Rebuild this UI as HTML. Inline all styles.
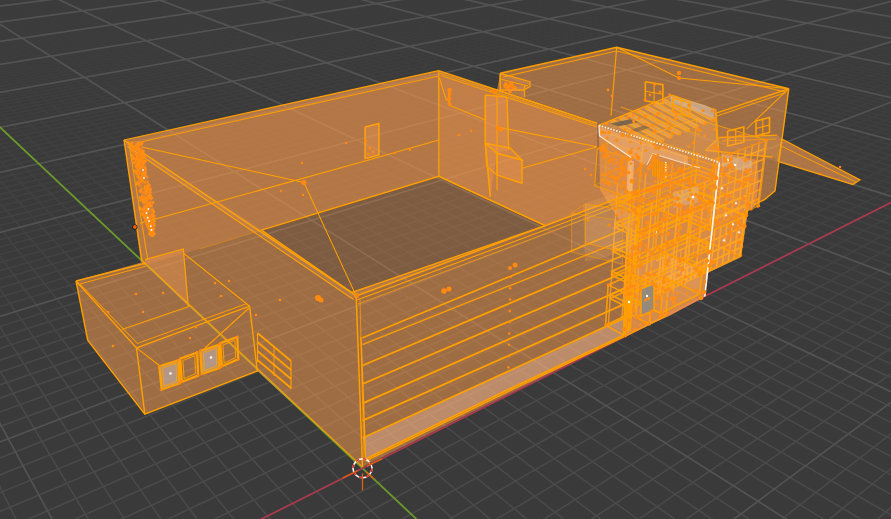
<!DOCTYPE html><html><head><meta charset="utf-8"><title>3D Viewport</title><style>html,body{margin:0;padding:0;background:#3a3a3a;overflow:hidden}svg{display:block}</style></head><body><svg width="891" height="519" viewBox="0 0 891 519">
<defs><linearGradient id="fade" x1="0" y1="0" x2="0" y2="1"><stop offset="0" stop-color="#fff" stop-opacity="0.12"/><stop offset="0.25" stop-color="#fff" stop-opacity="0.30"/><stop offset="0.5" stop-color="#fff" stop-opacity="0.5"/><stop offset="0.75" stop-color="#fff" stop-opacity="0.95"/><stop offset="1" stop-color="#fff" stop-opacity="1"/></linearGradient><mask id="m" maskUnits="userSpaceOnUse" x="0" y="0" width="891" height="519"><rect width="891" height="519" fill="url(#fade)"/></mask></defs>
<rect width="891" height="519" fill="#3a3a3a"/>
<g stroke="#4a4a4a" stroke-width="1.6" mask="url(#m)"><line x1="18.3" y1="524.0" x2="-5.0" y2="476.7"/><line x1="91.2" y1="524.0" x2="-5.0" y2="362.7"/><line x1="127.7" y1="524.0" x2="-5.0" y2="319.2"/><line x1="164.3" y1="524.0" x2="-5.0" y2="282.0"/><line x1="200.9" y1="524.0" x2="-5.0" y2="249.9"/><line x1="237.6" y1="524.0" x2="-5.0" y2="221.9"/><line x1="274.3" y1="524.0" x2="-5.0" y2="197.3"/><line x1="311.1" y1="524.0" x2="-5.0" y2="175.5"/><line x1="347.9" y1="524.0" x2="-5.0" y2="156.0"/><line x1="384.8" y1="524.0" x2="-5.0" y2="138.4"/><line x1="458.7" y1="524.0" x2="-5.0" y2="108.2"/><line x1="495.7" y1="524.0" x2="-5.0" y2="95.1"/><line x1="532.8" y1="524.0" x2="-5.0" y2="83.1"/><line x1="570.0" y1="524.0" x2="-5.0" y2="72.1"/><line x1="607.2" y1="524.0" x2="-5.0" y2="62.0"/><line x1="644.4" y1="524.0" x2="-5.0" y2="52.6"/><line x1="681.8" y1="524.0" x2="-5.0" y2="43.8"/><line x1="719.1" y1="524.0" x2="-5.0" y2="35.7"/><line x1="756.5" y1="524.0" x2="-5.0" y2="28.2"/><line x1="831.5" y1="524.0" x2="-5.0" y2="14.5"/><line x1="869.1" y1="524.0" x2="-5.0" y2="8.3"/><line x1="896.0" y1="517.8" x2="-5.0" y2="2.4"/><line x1="896.0" y1="497.1" x2="-5.0" y2="-3.1"/><line x1="896.0" y1="477.5" x2="1.1" y2="-5.0"/><line x1="896.0" y1="459.0" x2="10.7" y2="-5.0"/><line x1="896.0" y1="441.5" x2="20.3" y2="-5.0"/><line x1="896.0" y1="424.9" x2="29.9" y2="-5.0"/><line x1="896.0" y1="409.1" x2="39.5" y2="-5.0"/><line x1="896.0" y1="379.8" x2="58.7" y2="-5.0"/><line x1="896.0" y1="366.2" x2="68.4" y2="-5.0"/><line x1="896.0" y1="353.2" x2="78.0" y2="-5.0"/><line x1="896.0" y1="340.7" x2="87.7" y2="-5.0"/><line x1="896.0" y1="328.9" x2="97.4" y2="-5.0"/><line x1="896.0" y1="317.5" x2="107.1" y2="-5.0"/><line x1="896.0" y1="306.6" x2="116.8" y2="-5.0"/><line x1="896.0" y1="296.2" x2="126.6" y2="-5.0"/><line x1="896.0" y1="286.2" x2="136.3" y2="-5.0"/><line x1="896.0" y1="267.3" x2="155.8" y2="-5.0"/><line x1="896.0" y1="258.4" x2="165.6" y2="-5.0"/><line x1="896.0" y1="249.8" x2="175.4" y2="-5.0"/><line x1="896.0" y1="241.6" x2="185.3" y2="-5.0"/><line x1="896.0" y1="233.6" x2="195.1" y2="-5.0"/><line x1="896.0" y1="226.0" x2="204.9" y2="-5.0"/><line x1="896.0" y1="218.5" x2="214.8" y2="-5.0"/><line x1="896.0" y1="211.4" x2="224.7" y2="-5.0"/><line x1="896.0" y1="204.5" x2="234.6" y2="-5.0"/><line x1="896.0" y1="191.3" x2="254.4" y2="-5.0"/><line x1="896.0" y1="185.0" x2="264.3" y2="-5.0"/><line x1="896.0" y1="179.0" x2="274.3" y2="-5.0"/><line x1="896.0" y1="173.1" x2="284.3" y2="-5.0"/><line x1="896.0" y1="167.4" x2="294.2" y2="-5.0"/><line x1="896.0" y1="161.9" x2="304.2" y2="-5.0"/><line x1="896.0" y1="156.5" x2="314.2" y2="-5.0"/><line x1="896.0" y1="151.3" x2="324.3" y2="-5.0"/><line x1="896.0" y1="146.2" x2="334.3" y2="-5.0"/><line x1="896.0" y1="136.5" x2="354.4" y2="-5.0"/><line x1="896.0" y1="131.9" x2="364.5" y2="-5.0"/><line x1="896.0" y1="127.4" x2="374.6" y2="-5.0"/><line x1="896.0" y1="123.0" x2="384.7" y2="-5.0"/><line x1="896.0" y1="118.7" x2="394.9" y2="-5.0"/><line x1="896.0" y1="114.5" x2="405.0" y2="-5.0"/><line x1="896.0" y1="110.4" x2="415.2" y2="-5.0"/><line x1="896.0" y1="106.5" x2="425.4" y2="-5.0"/><line x1="896.0" y1="102.6" x2="435.5" y2="-5.0"/><line x1="896.0" y1="95.2" x2="456.0" y2="-5.0"/><line x1="896.0" y1="91.6" x2="466.2" y2="-5.0"/><line x1="896.0" y1="88.1" x2="476.5" y2="-5.0"/><line x1="896.0" y1="84.7" x2="486.7" y2="-5.0"/><line x1="896.0" y1="81.3" x2="497.0" y2="-5.0"/><line x1="896.0" y1="78.1" x2="507.3" y2="-5.0"/><line x1="896.0" y1="74.9" x2="517.6" y2="-5.0"/><line x1="896.0" y1="71.7" x2="528.0" y2="-5.0"/><line x1="896.0" y1="68.7" x2="538.3" y2="-5.0"/><line x1="896.0" y1="62.8" x2="559.1" y2="-5.0"/><line x1="896.0" y1="60.0" x2="569.5" y2="-5.0"/><line x1="896.0" y1="57.2" x2="579.9" y2="-5.0"/><line x1="896.0" y1="54.4" x2="590.3" y2="-5.0"/><line x1="896.0" y1="51.8" x2="600.7" y2="-5.0"/><line x1="896.0" y1="49.1" x2="611.2" y2="-5.0"/><line x1="896.0" y1="46.6" x2="621.7" y2="-5.0"/><line x1="896.0" y1="44.1" x2="632.2" y2="-5.0"/><line x1="896.0" y1="41.6" x2="642.7" y2="-5.0"/><line x1="896.0" y1="36.8" x2="663.7" y2="-5.0"/><line x1="896.0" y1="34.5" x2="674.3" y2="-5.0"/><line x1="896.0" y1="32.2" x2="684.8" y2="-5.0"/><line x1="896.0" y1="30.0" x2="695.4" y2="-5.0"/><line x1="896.0" y1="27.8" x2="706.0" y2="-5.0"/><line x1="896.0" y1="25.7" x2="716.7" y2="-5.0"/><line x1="896.0" y1="23.6" x2="727.3" y2="-5.0"/><line x1="896.0" y1="21.5" x2="737.9" y2="-5.0"/><line x1="896.0" y1="19.5" x2="748.6" y2="-5.0"/><line x1="896.0" y1="15.5" x2="770.0" y2="-5.0"/><line x1="896.0" y1="13.6" x2="780.7" y2="-5.0"/><line x1="896.0" y1="11.7" x2="791.5" y2="-5.0"/><line x1="896.0" y1="9.8" x2="802.2" y2="-5.0"/><line x1="896.0" y1="8.0" x2="813.0" y2="-5.0"/><line x1="896.0" y1="6.2" x2="823.8" y2="-5.0"/><line x1="896.0" y1="4.4" x2="834.6" y2="-5.0"/><line x1="896.0" y1="2.7" x2="845.4" y2="-5.0"/><line x1="896.0" y1="1.0" x2="856.2" y2="-5.0"/><line x1="896.0" y1="-2.3" x2="877.9" y2="-5.0"/><line x1="896.0" y1="-3.9" x2="888.8" y2="-5.0"/><line x1="871.9" y1="524.0" x2="896.0" y2="503.0"/><line x1="823.7" y1="524.0" x2="896.0" y2="464.4"/><line x1="775.6" y1="524.0" x2="896.0" y2="429.8"/><line x1="679.5" y1="524.0" x2="896.0" y2="370.3"/><line x1="631.6" y1="524.0" x2="896.0" y2="344.6"/><line x1="583.8" y1="524.0" x2="896.0" y2="321.1"/><line x1="536.1" y1="524.0" x2="896.0" y2="299.5"/><line x1="488.5" y1="524.0" x2="896.0" y2="279.6"/><line x1="441.0" y1="524.0" x2="896.0" y2="261.3"/><line x1="393.5" y1="524.0" x2="896.0" y2="244.3"/><line x1="346.2" y1="524.0" x2="896.0" y2="228.5"/><line x1="298.9" y1="524.0" x2="896.0" y2="213.8"/><line x1="204.6" y1="524.0" x2="896.0" y2="187.2"/><line x1="157.6" y1="524.0" x2="896.0" y2="175.1"/><line x1="110.7" y1="524.0" x2="896.0" y2="163.8"/><line x1="63.9" y1="524.0" x2="896.0" y2="153.1"/><line x1="17.1" y1="524.0" x2="896.0" y2="143.1"/><line x1="-5.0" y1="513.6" x2="896.0" y2="133.6"/><line x1="-5.0" y1="494.8" x2="896.0" y2="124.6"/><line x1="-5.0" y1="476.9" x2="896.0" y2="116.0"/><line x1="-5.0" y1="459.9" x2="896.0" y2="108.0"/><line x1="-5.0" y1="428.5" x2="896.0" y2="92.9"/><line x1="-5.0" y1="413.8" x2="896.0" y2="86.0"/><line x1="-5.0" y1="399.9" x2="896.0" y2="79.3"/><line x1="-5.0" y1="386.6" x2="896.0" y2="73.0"/><line x1="-5.0" y1="373.9" x2="896.0" y2="66.9"/><line x1="-5.0" y1="361.7" x2="896.0" y2="61.1"/><line x1="-5.0" y1="350.0" x2="896.0" y2="55.6"/><line x1="-5.0" y1="338.9" x2="896.0" y2="50.2"/><line x1="-5.0" y1="328.1" x2="896.0" y2="45.1"/><line x1="-5.0" y1="308.0" x2="896.0" y2="35.5"/><line x1="-5.0" y1="298.5" x2="896.0" y2="31.0"/><line x1="-5.0" y1="289.3" x2="896.0" y2="26.6"/><line x1="-5.0" y1="280.5" x2="896.0" y2="22.4"/><line x1="-5.0" y1="272.0" x2="896.0" y2="18.3"/><line x1="-5.0" y1="263.8" x2="896.0" y2="14.4"/><line x1="-5.0" y1="255.9" x2="896.0" y2="10.7"/><line x1="-5.0" y1="248.3" x2="896.0" y2="7.0"/><line x1="-5.0" y1="240.9" x2="896.0" y2="3.5"/><line x1="-5.0" y1="226.8" x2="896.0" y2="-3.2"/><line x1="-5.0" y1="220.2" x2="890.5" y2="-5.0"/><line x1="-5.0" y1="213.7" x2="878.0" y2="-5.0"/><line x1="-5.0" y1="207.4" x2="865.5" y2="-5.0"/><line x1="-5.0" y1="201.4" x2="853.0" y2="-5.0"/><line x1="-5.0" y1="195.5" x2="840.5" y2="-5.0"/><line x1="-5.0" y1="189.8" x2="828.1" y2="-5.0"/><line x1="-5.0" y1="184.2" x2="815.7" y2="-5.0"/><line x1="-5.0" y1="178.8" x2="803.3" y2="-5.0"/><line x1="-5.0" y1="168.5" x2="778.5" y2="-5.0"/><line x1="-5.0" y1="163.5" x2="766.2" y2="-5.0"/><line x1="-5.0" y1="158.7" x2="753.9" y2="-5.0"/><line x1="-5.0" y1="154.1" x2="741.6" y2="-5.0"/><line x1="-5.0" y1="149.5" x2="729.3" y2="-5.0"/><line x1="-5.0" y1="145.1" x2="717.1" y2="-5.0"/><line x1="-5.0" y1="140.7" x2="704.8" y2="-5.0"/><line x1="-5.0" y1="136.5" x2="692.6" y2="-5.0"/><line x1="-5.0" y1="132.4" x2="680.5" y2="-5.0"/><line x1="-5.0" y1="124.5" x2="656.2" y2="-5.0"/><line x1="-5.0" y1="120.7" x2="644.0" y2="-5.0"/><line x1="-5.0" y1="117.0" x2="631.9" y2="-5.0"/><line x1="-5.0" y1="113.4" x2="619.9" y2="-5.0"/><line x1="-5.0" y1="109.8" x2="607.8" y2="-5.0"/><line x1="-5.0" y1="106.4" x2="595.8" y2="-5.0"/><line x1="-5.0" y1="103.0" x2="583.8" y2="-5.0"/><line x1="-5.0" y1="99.7" x2="571.8" y2="-5.0"/><line x1="-5.0" y1="96.4" x2="559.8" y2="-5.0"/><line x1="-5.0" y1="90.2" x2="535.9" y2="-5.0"/><line x1="-5.0" y1="87.2" x2="524.0" y2="-5.0"/><line x1="-5.0" y1="84.2" x2="512.1" y2="-5.0"/><line x1="-5.0" y1="81.3" x2="500.3" y2="-5.0"/><line x1="-5.0" y1="78.5" x2="488.4" y2="-5.0"/><line x1="-5.0" y1="75.7" x2="476.6" y2="-5.0"/><line x1="-5.0" y1="73.0" x2="464.8" y2="-5.0"/><line x1="-5.0" y1="70.3" x2="453.0" y2="-5.0"/><line x1="-5.0" y1="67.7" x2="441.2" y2="-5.0"/><line x1="-5.0" y1="62.6" x2="417.8" y2="-5.0"/><line x1="-5.0" y1="60.2" x2="406.1" y2="-5.0"/><line x1="-5.0" y1="57.8" x2="394.4" y2="-5.0"/><line x1="-5.0" y1="55.4" x2="382.7" y2="-5.0"/><line x1="-5.0" y1="53.1" x2="371.1" y2="-5.0"/><line x1="-5.0" y1="50.8" x2="359.5" y2="-5.0"/><line x1="-5.0" y1="48.6" x2="347.9" y2="-5.0"/><line x1="-5.0" y1="46.4" x2="336.3" y2="-5.0"/><line x1="-5.0" y1="44.2" x2="324.7" y2="-5.0"/><line x1="-5.0" y1="40.0" x2="301.6" y2="-5.0"/><line x1="-5.0" y1="38.0" x2="290.1" y2="-5.0"/><line x1="-5.0" y1="36.0" x2="278.7" y2="-5.0"/><line x1="-5.0" y1="34.0" x2="267.2" y2="-5.0"/><line x1="-5.0" y1="32.1" x2="255.8" y2="-5.0"/><line x1="-5.0" y1="30.2" x2="244.3" y2="-5.0"/><line x1="-5.0" y1="28.3" x2="232.9" y2="-5.0"/><line x1="-5.0" y1="26.5" x2="221.5" y2="-5.0"/><line x1="-5.0" y1="24.7" x2="210.2" y2="-5.0"/><line x1="-5.0" y1="21.2" x2="187.5" y2="-5.0"/><line x1="-5.0" y1="19.4" x2="176.2" y2="-5.0"/><line x1="-5.0" y1="17.8" x2="164.9" y2="-5.0"/><line x1="-5.0" y1="16.1" x2="153.6" y2="-5.0"/><line x1="-5.0" y1="14.5" x2="142.4" y2="-5.0"/><line x1="-5.0" y1="12.8" x2="131.2" y2="-5.0"/><line x1="-5.0" y1="11.3" x2="119.9" y2="-5.0"/><line x1="-5.0" y1="9.7" x2="108.7" y2="-5.0"/><line x1="-5.0" y1="8.2" x2="97.6" y2="-5.0"/><line x1="-5.0" y1="5.2" x2="75.3" y2="-5.0"/><line x1="-5.0" y1="3.7" x2="64.2" y2="-5.0"/><line x1="-5.0" y1="2.3" x2="53.1" y2="-5.0"/><line x1="-5.0" y1="0.8" x2="42.0" y2="-5.0"/><line x1="-5.0" y1="-0.6" x2="30.9" y2="-5.0"/><line x1="-5.0" y1="-2.0" x2="19.9" y2="-5.0"/><line x1="-5.0" y1="-3.3" x2="8.8" y2="-5.0"/><line x1="-5.0" y1="-4.7" x2="-2.2" y2="-5.0"/></g>
<g stroke="#535353" stroke-width="1.7"><line x1="54.7" y1="524.0" x2="-5.0" y2="414.4"/><line x1="794.0" y1="524.0" x2="-5.0" y2="21.1"/><line x1="896.0" y1="394.1" x2="49.1" y2="-5.0"/><line x1="896.0" y1="276.6" x2="146.1" y2="-5.0"/><line x1="896.0" y1="197.8" x2="244.5" y2="-5.0"/><line x1="896.0" y1="141.3" x2="344.4" y2="-5.0"/><line x1="896.0" y1="98.8" x2="445.8" y2="-5.0"/><line x1="896.0" y1="65.7" x2="548.7" y2="-5.0"/><line x1="896.0" y1="39.2" x2="653.2" y2="-5.0"/><line x1="896.0" y1="17.5" x2="759.3" y2="-5.0"/><line x1="896.0" y1="-0.7" x2="867.1" y2="-5.0"/><line x1="727.5" y1="524.0" x2="896.0" y2="398.5"/><line x1="-5.0" y1="443.8" x2="896.0" y2="100.3"/><line x1="-5.0" y1="317.9" x2="896.0" y2="40.2"/><line x1="-5.0" y1="233.7" x2="896.0" y2="0.1"/><line x1="-5.0" y1="173.6" x2="790.9" y2="-5.0"/><line x1="-5.0" y1="128.4" x2="668.3" y2="-5.0"/><line x1="-5.0" y1="93.3" x2="547.8" y2="-5.0"/><line x1="-5.0" y1="65.1" x2="429.5" y2="-5.0"/><line x1="-5.0" y1="42.1" x2="313.2" y2="-5.0"/><line x1="-5.0" y1="22.9" x2="198.8" y2="-5.0"/><line x1="-5.0" y1="6.7" x2="86.4" y2="-5.0"/></g>
<line x1="421.7" y1="524.0" x2="-5.0" y2="122.6" stroke="#6b9a2a" stroke-width="1.8"/>
<line x1="251.7" y1="524.0" x2="896.0" y2="200.1" stroke="#a83a4e" stroke-width="1.8"/>
<polygon points="124.0,140.0 438.7,70.7 497.0,90.0 500.3,73.3 616.7,47.3 788.8,88.7 781.9,139.0 859.9,179.9 853.0,184.5 778.4,161.5 775.0,191.0 764.5,199.6 754.0,204.8 755.7,206.2 748.0,210.8 743.3,241.6 740.2,257.5 707.9,272.8 704.8,296.8 669.4,315.8 623.5,336.5 362.5,467.0 257.3,371.0 144.8,414.1 87.7,340.1 76.0,281.0 141.0,262.5" fill="#ff9e50" fill-opacity="0.342" />
<path d="M124.0 140.0 L438.7 70.7 L497.0 90.0 L500.3 73.3 L616.7 47.3 L788.8 88.7 L781.9 139.0 L859.9 179.9 L853.0 184.5 L778.4 161.5 L775.0 191.0 L764.5 199.6 L754.0 204.8 L755.7 206.2 L748.0 210.8 L743.3 241.6 L740.2 257.5 L707.9 272.8 L704.8 296.8 L669.4 315.8 L623.5 336.5 L362.5 467.0 L257.3 371.0 L144.8 414.1 L87.7 340.1 L76.0 281.0 L141.0 262.5 Z M261.4 230.1 L438.8 176.3 L545.3 225.7 L352.0 292.5 Z" fill="#ff9e50" fill-opacity="0.263" fill-rule="evenodd"/>
<path d="M124.0 140.0 L438.7 70.7 L597.0 123.3 L597.0 150.0 L595.0 186.0 L627.0 200.0 L634.9 193.6 L356.2 296.0 Z M261.4 230.1 L438.8 176.3 L545.3 225.7 L352.0 292.5 Z" fill="#ff9e50" fill-opacity="0.21" fill-rule="evenodd"/>
<polygon points="124.0,140.0 261.4,230.1 143.0,266.0" fill="#ff9e50" fill-opacity="0.210" />
<polygon points="438.7,73.0 497.0,92.0 597.0,125.0 597.0,150.0 595.0,186.0 627.0,200.0 634.9,193.6 545.3,225.7 438.8,176.3" fill="#ff9e50" fill-opacity="0.190" />
<polygon points="129.5,141.0 142.0,141.0 156.0,225.0 153.0,238.0 147.0,225.0" fill="#ff9020" fill-opacity="0.350" />
<polygon points="145.0,259.7 183.3,249.0 188.3,306.3 150.0,268.0" fill="#ff9e50" fill-opacity="0.350" />
<polygon points="598.9,125.4 719.4,162.3 721.0,152.0 757.0,160.0 758.7,180.0 755.7,206.2 748.0,210.8 743.3,241.6 740.2,257.5 707.9,272.8 704.8,296.8 669.4,315.8 623.5,336.5 627.0,232.0 600.0,190.0" fill="#ffa04b" fill-opacity="0.550" />
<polygon points="598.9,125.4 672.0,95.0 716.0,110.0 719.4,162.3" fill="#ffa850" fill-opacity="0.220" />
<polygon points="583.0,204.0 631.0,188.0 631.0,250.0 585.0,262.0" fill="#ffb060" fill-opacity="0.180" />
<polygon points="781.9,139.0 859.9,179.9 853.0,184.5 778.4,161.5" fill="#ff9e50" fill-opacity="0.150" />
<polygon points="363.0,438.0 624.3,318.0 624.3,335.0 507.4,390.0 365.0,459.3" fill="#ecc0a8" fill-opacity="0.380" />
<polyline points="124.0,140.0 438.7,70.7" fill="none" stroke="#ffa000" stroke-width="1.26" stroke-opacity="1.00" />
<polyline points="141.7,141.7 438.7,76.0" fill="none" stroke="#ffa000" stroke-width="1.03" stroke-opacity="0.90" />
<polyline points="124.0,140.0 356.2,296.0" fill="none" stroke="#ffa000" stroke-width="1.49" stroke-opacity="1.00" />
<polyline points="127.5,146.5 353.5,299.5" fill="none" stroke="#ffa000" stroke-width="1.15" stroke-opacity="0.95" />
<polygon points="124.0,140.0 356.2,296.0 353.5,299.5 127.5,146.5" fill="#ffb060" fill-opacity="0.180" />
<polyline points="356.2,296.0 362.5,467.0" fill="none" stroke="#ffa000" stroke-width="1.49" stroke-opacity="1.00" />
<polyline points="360.0,300.0 364.0,460.0" fill="none" stroke="#ffa000" stroke-width="0.92" stroke-opacity="0.80" />
<polyline points="124.0,140.0 141.7,260.0" fill="none" stroke="#ffa000" stroke-width="1.38" stroke-opacity="1.00" />
<polyline points="438.7,70.7 438.8,176.3" fill="none" stroke="#ffa000" stroke-width="1.26" stroke-opacity="1.00" />
<polyline points="261.4,230.1 438.8,176.3 545.3,225.7 352.0,292.5 261.4,230.1" fill="none" stroke="#ffa000" stroke-width="1.38" stroke-opacity="1.00" />
<polyline points="200.0,248.9 261.4,230.1" fill="none" stroke="#ffa000" stroke-width="1.15" stroke-opacity="0.35" />
<polyline points="140.0,223.3 357.0,163.3 438.7,140.0" fill="none" stroke="#ffa000" stroke-width="1.15" stroke-opacity="1.00" />
<polyline points="141.7,147.0 303.9,182.5 356.2,296.0" fill="none" stroke="#ffa000" stroke-width="1.03" stroke-opacity="1.00" />
<polyline points="438.7,70.7 497.0,90.0 597.0,123.3" fill="none" stroke="#ffa000" stroke-width="1.38" stroke-opacity="1.00" />
<polyline points="441.0,75.5 497.0,94.0 597.0,127.0" fill="none" stroke="#ffa000" stroke-width="1.15" stroke-opacity="0.95" />
<polyline points="440.0,73.0 497.0,92.0 597.0,125.2" fill="none" stroke="#ffa000" stroke-width="0.92" stroke-opacity="0.80" />
<polyline points="438.8,176.3 545.3,225.7" fill="none" stroke="#ffa000" stroke-width="1.15" stroke-opacity="1.00" />
<polyline points="141.7,260.0 362.5,467.0" fill="none" stroke="#ffa000" stroke-width="1.15" stroke-opacity="0.80" />
<polyline points="356.2,296.0 543.7,226.3 640.0,190.0" fill="none" stroke="#ffa000" stroke-width="1.49" stroke-opacity="1.00" />
<polyline points="357.0,300.0 545.0,230.0 640.0,194.0" fill="none" stroke="#ffa000" stroke-width="1.15" stroke-opacity="1.00" />
<polyline points="358.0,304.0 545.0,234.0 640.0,198.0" fill="none" stroke="#ffa000" stroke-width="0.92" stroke-opacity="0.80" />
<polyline points="362.5,337.8 624.3,228.9" fill="none" stroke="#ffa000" stroke-width="1.61" stroke-opacity="1.00" />
<polyline points="362.5,344.7 624.3,239.8" fill="none" stroke="#ffa000" stroke-width="1.38" stroke-opacity="0.95" />
<polyline points="362.5,365.5 624.3,255.0" fill="none" stroke="#ffa000" stroke-width="1.84" stroke-opacity="1.00" />
<polyline points="362.5,384.0 624.3,272.4" fill="none" stroke="#ffa000" stroke-width="1.84" stroke-opacity="1.00" />
<polyline points="362.5,403.3 624.3,288.7" fill="none" stroke="#ffa000" stroke-width="1.84" stroke-opacity="1.00" />
<polyline points="362.5,420.7 624.3,304.1" fill="none" stroke="#ffa000" stroke-width="1.84" stroke-opacity="1.00" />
<polyline points="362.5,438.0 624.3,318.1" fill="none" stroke="#ffa000" stroke-width="1.72" stroke-opacity="1.00" />
<polyline points="365.0,459.3 507.4,390.0 624.3,335.0" fill="none" stroke="#ffa000" stroke-width="1.72" stroke-opacity="1.00" />
<polyline points="365.5,461.0 507.4,391.8 624.3,336.6" fill="none" stroke="#ffa000" stroke-width="1.49" stroke-opacity="1.00" />
<polyline points="361.0,337.0 365.5,457.5" fill="none" stroke="#ffa000" stroke-width="1.49" stroke-opacity="1.00" />
<polyline points="627.0,232.0 623.5,335.0" fill="none" stroke="#ffa000" stroke-width="1.61" stroke-opacity="1.00" />
<polyline points="631.0,234.0 628.0,333.0" fill="none" stroke="#ffa000" stroke-width="1.15" stroke-opacity="1.00" />
<circle cx="510.5" cy="277.0" r="1.3" fill="#ff8a10" fill-opacity="0.95"/>
<circle cx="510.2" cy="288.3" r="1.3" fill="#ff8a10" fill-opacity="0.95"/>
<circle cx="510.0" cy="299.6" r="1.3" fill="#ff8a10" fill-opacity="0.95"/>
<circle cx="509.8" cy="310.9" r="1.3" fill="#ff8a10" fill-opacity="0.95"/>
<circle cx="509.5" cy="322.2" r="1.3" fill="#ff8a10" fill-opacity="0.95"/>
<circle cx="509.2" cy="333.5" r="1.3" fill="#ff8a10" fill-opacity="0.95"/>
<circle cx="509.0" cy="344.8" r="1.3" fill="#ff8a10" fill-opacity="0.95"/>
<circle cx="508.8" cy="356.1" r="1.3" fill="#ff8a10" fill-opacity="0.95"/>
<circle cx="508.5" cy="367.4" r="1.3" fill="#ff8a10" fill-opacity="0.95"/>
<polyline points="76.0,281.0 136.5,347.9 249.6,306.2" fill="none" stroke="#ffa000" stroke-width="1.38" stroke-opacity="1.00" />
<polyline points="76.0,281.0 146.3,263.0" fill="none" stroke="#ffa000" stroke-width="1.38" stroke-opacity="1.00" />
<polyline points="76.0,281.0 87.7,340.1 144.8,414.1 257.3,371.0 249.6,306.2" fill="none" stroke="#ffa000" stroke-width="1.38" stroke-opacity="1.00" />
<polyline points="136.5,347.9 144.8,414.1" fill="none" stroke="#ffa000" stroke-width="1.38" stroke-opacity="1.00" />
<polyline points="79.5,283.5 137.5,343.5 247.0,303.5" fill="none" stroke="#ffa000" stroke-width="1.03" stroke-opacity="0.90" />
<polyline points="80.0,284.0 146.0,266.0" fill="none" stroke="#ffa000" stroke-width="1.03" stroke-opacity="0.90" />
<polyline points="121.7,329.4 189.5,306.2" fill="none" stroke="#ffa000" stroke-width="1.03" stroke-opacity="1.00" />
<polyline points="183.3,253.0 249.6,306.2" fill="none" stroke="#ffa000" stroke-width="1.15" stroke-opacity="1.00" />
<polyline points="145.0,259.7 183.3,249.0 188.3,306.3" fill="none" stroke="#ffa000" stroke-width="1.26" stroke-opacity="1.00" />
<polyline points="141.0,322.0 249.0,304.0" fill="none" stroke="#ffa000" stroke-width="0.00" stroke-opacity="1.00" />
<polyline points="136.5,347.9 160.0,366.0" fill="none" stroke="#ffa000" stroke-width="1.03" stroke-opacity="1.00" />
<polyline points="249.0,308.0 205.0,348.0" fill="none" stroke="#ffa000" stroke-width="1.03" stroke-opacity="1.00" />
<polygon points="159.3,366.3 178.7,360.2 179.6,383.3 161.7,389.5" fill="#b8a094" fill-opacity="0.800" />
<polyline points="159.3,366.3 178.7,360.2 179.6,383.3 161.7,389.5 159.3,366.3" fill="none" stroke="#ffa000" stroke-width="2.30" stroke-opacity="1.00" />
<polyline points="162.5,368.2 176.0,363.4 176.7,381.4 164.1,386.3 162.5,368.2" fill="none" stroke="#ffa000" stroke-width="1.03" stroke-opacity="0.90" />
<circle cx="159.3" cy="366.3" r="1.3" fill="#ff8a10" fill-opacity="1.00"/>
<circle cx="178.7" cy="360.2" r="1.3" fill="#ff8a10" fill-opacity="1.00"/>
<circle cx="179.6" cy="383.3" r="1.3" fill="#ff8a10" fill-opacity="1.00"/>
<circle cx="161.7" cy="389.5" r="1.3" fill="#ff8a10" fill-opacity="1.00"/>
<polyline points="180.2,358.6 197.2,352.5 198.1,375.6 181.8,381.8 180.2,358.6" fill="none" stroke="#ffa000" stroke-width="2.30" stroke-opacity="1.00" />
<polyline points="182.9,360.5 194.8,355.7 195.5,373.7 184.1,378.6 182.9,360.5" fill="none" stroke="#ffa000" stroke-width="1.03" stroke-opacity="0.90" />
<circle cx="180.2" cy="358.6" r="1.3" fill="#ff8a10" fill-opacity="1.00"/>
<circle cx="197.2" cy="352.5" r="1.3" fill="#ff8a10" fill-opacity="1.00"/>
<circle cx="198.1" cy="375.6" r="1.3" fill="#ff8a10" fill-opacity="1.00"/>
<circle cx="181.8" cy="381.8" r="1.3" fill="#ff8a10" fill-opacity="1.00"/>
<polygon points="200.3,350.9 218.8,344.8 219.7,367.9 201.8,374.0" fill="#b8a094" fill-opacity="0.800" />
<polyline points="200.3,350.9 218.8,344.8 219.7,367.9 201.8,374.0 200.3,350.9" fill="none" stroke="#ffa000" stroke-width="2.30" stroke-opacity="1.00" />
<polyline points="203.3,352.8 216.2,348.0 216.8,366.0 204.3,370.8 203.3,352.8" fill="none" stroke="#ffa000" stroke-width="1.03" stroke-opacity="0.90" />
<circle cx="200.3" cy="350.9" r="1.3" fill="#ff8a10" fill-opacity="1.00"/>
<circle cx="218.8" cy="344.8" r="1.3" fill="#ff8a10" fill-opacity="1.00"/>
<circle cx="219.7" cy="367.9" r="1.3" fill="#ff8a10" fill-opacity="1.00"/>
<circle cx="201.8" cy="374.0" r="1.3" fill="#ff8a10" fill-opacity="1.00"/>
<polyline points="220.3,343.2 237.3,337.0 238.2,359.3 221.8,366.3 220.3,343.2" fill="none" stroke="#ffa000" stroke-width="2.30" stroke-opacity="1.00" />
<polyline points="223.0,345.0 234.9,340.2 235.6,357.6 224.1,363.0 223.0,345.0" fill="none" stroke="#ffa000" stroke-width="1.03" stroke-opacity="0.90" />
<circle cx="220.3" cy="343.2" r="1.3" fill="#ff8a10" fill-opacity="1.00"/>
<circle cx="237.3" cy="337.0" r="1.3" fill="#ff8a10" fill-opacity="1.00"/>
<circle cx="238.2" cy="359.3" r="1.3" fill="#ff8a10" fill-opacity="1.00"/>
<circle cx="221.8" cy="366.3" r="1.3" fill="#ff8a10" fill-opacity="1.00"/>
<circle cx="170.5" cy="373.5" r="1.3" fill="#fff" fill-opacity="1.00"/>
<circle cx="211.0" cy="357.5" r="1.3" fill="#fff" fill-opacity="1.00"/>
<polyline points="257.5,333.0 291.0,361.0" fill="none" stroke="#ffa000" stroke-width="1.84" stroke-opacity="1.00" />
<polyline points="257.5,342.0 291.0,370.0" fill="none" stroke="#ffa000" stroke-width="1.84" stroke-opacity="1.00" />
<polyline points="257.5,351.0 291.0,379.0" fill="none" stroke="#ffa000" stroke-width="1.84" stroke-opacity="1.00" />
<polyline points="257.5,360.0 291.0,388.0" fill="none" stroke="#ffa000" stroke-width="1.84" stroke-opacity="1.00" />
<polyline points="257.5,333.0 257.5,362.0" fill="none" stroke="#ffa000" stroke-width="1.15" stroke-opacity="1.00" />
<polyline points="291.0,361.0 291.0,389.0" fill="none" stroke="#ffa000" stroke-width="1.15" stroke-opacity="1.00" />
<polyline points="274.0,347.0 274.0,376.0" fill="none" stroke="#ffa000" stroke-width="0.92" stroke-opacity="1.00" />
<polyline points="365.0,127.0 379.0,123.5 379.0,155.0 365.0,158.5 365.0,127.0" fill="none" stroke="#ffa000" stroke-width="1.49" stroke-opacity="1.00" />
<polygon points="365.0,127.0 379.0,123.5 379.0,155.0 365.0,158.5" fill="#ff9e50" fill-opacity="0.300" />
<polygon points="485.3,95.0 507.0,97.0 508.7,150.0 497.0,153.0 490.3,196.7 485.3,143.0" fill="#ff9e50" fill-opacity="0.300" />
<polyline points="485.3,95.0 485.3,143.0 490.3,196.7" fill="none" stroke="#ffa000" stroke-width="1.61" stroke-opacity="1.00" />
<polyline points="507.0,97.0 508.7,150.0" fill="none" stroke="#ffa000" stroke-width="1.49" stroke-opacity="1.00" />
<polyline points="497.0,96.0 497.0,190.0" fill="none" stroke="#ffa000" stroke-width="1.26" stroke-opacity="0.90" />
<polyline points="485.3,95.0 507.0,97.0" fill="none" stroke="#ffa000" stroke-width="1.38" stroke-opacity="1.00" />
<polygon points="497.0,153.3 522.0,160.0 522.0,183.3 497.0,175.0" fill="#ff9e50" fill-opacity="0.300" />
<polygon points="485.3,143.3 510.0,148.0 522.0,160.0 497.0,153.3" fill="#ff9e50" fill-opacity="0.220" />
<polyline points="497.0,153.3 522.0,160.0 522.0,183.3 497.0,175.0 497.0,153.3" fill="none" stroke="#ffa000" stroke-width="1.49" stroke-opacity="1.00" />
<polyline points="485.3,143.3 510.0,148.0 522.0,160.0 497.0,153.3 485.3,143.3" fill="none" stroke="#ffa000" stroke-width="1.38" stroke-opacity="1.00" />
<polyline points="485.3,143.3 486.5,166.0 497.0,175.0" fill="none" stroke="#ffa000" stroke-width="1.15" stroke-opacity="1.00" />
<polygon points="500.3,73.3 530.0,81.7 530.0,86.7 523.3,90.0 500.3,90.0" fill="#ff9e50" fill-opacity="0.250" />
<polyline points="500.3,73.3 530.0,81.7 530.0,86.7 523.3,90.0 500.3,90.0 500.3,73.3" fill="none" stroke="#ffa000" stroke-width="1.26" stroke-opacity="1.00" />
<polyline points="500.3,79.0 528.0,86.0" fill="none" stroke="#ffa000" stroke-width="1.03" stroke-opacity="1.00" />
<circle cx="506.0" cy="84.0" r="2.0" fill="#ff8a10" fill-opacity="1.00"/>
<circle cx="509.0" cy="86.0" r="2.0" fill="#ff8a10" fill-opacity="1.00"/>
<circle cx="511.0" cy="83.0" r="2.0" fill="#ff8a10" fill-opacity="1.00"/>
<circle cx="513.0" cy="87.0" r="2.0" fill="#ff8a10" fill-opacity="1.00"/>
<circle cx="508.0" cy="89.0" r="2.0" fill="#ff8a10" fill-opacity="1.00"/>
<circle cx="505.0" cy="86.0" r="2.0" fill="#ff8a10" fill-opacity="1.00"/>
<circle cx="515.0" cy="88.0" r="2.0" fill="#ff8a10" fill-opacity="1.00"/>
<circle cx="510.0" cy="91.0" r="2.0" fill="#ff8a10" fill-opacity="1.00"/>
<circle cx="512.0" cy="85.0" r="2.0" fill="#ff8a10" fill-opacity="1.00"/>
<circle cx="507.0" cy="88.0" r="2.0" fill="#ff8a10" fill-opacity="1.00"/>
<circle cx="493.0" cy="91.0" r="2.0" fill="#ff8a10" fill-opacity="1.00"/>
<circle cx="495.0" cy="92.5" r="2.0" fill="#ff8a10" fill-opacity="1.00"/>
<polyline points="524.5,86.0 524.5,97.0" fill="none" stroke="#ffa000" stroke-width="1.26" stroke-opacity="1.00" />
<polygon points="500.3,90.0 524.5,86.0 524.5,97.0 500.3,91.5" fill="#ff9e50" fill-opacity="0.200" />
<polyline points="498.7,127.3 597.0,146.7 522.0,168.3" fill="none" stroke="#ffa000" stroke-width="1.15" stroke-opacity="1.00" />
<polyline points="448.7,105.0 485.3,120.0" fill="none" stroke="#ffa000" stroke-width="1.15" stroke-opacity="1.00" />
<polyline points="449.0,90.0 449.0,105.0" fill="none" stroke="#ffa000" stroke-width="1.38" stroke-opacity="1.00" />
<polyline points="439.5,78.0 446.5,101.0" fill="none" stroke="#ffa000" stroke-width="1.03" stroke-opacity="1.00" />
<polyline points="497.0,90.0 597.0,123.3" fill="none" stroke="#ffa000" stroke-width="1.15" stroke-opacity="1.00" />
<polyline points="500.3,73.3 616.7,47.3 788.8,88.7" fill="none" stroke="#ffa000" stroke-width="1.49" stroke-opacity="1.00" />
<polyline points="503.0,77.0 616.5,51.0 785.0,92.0" fill="none" stroke="#ffa000" stroke-width="1.03" stroke-opacity="0.90" />
<polyline points="500.3,73.3 500.3,91.0" fill="none" stroke="#ffa000" stroke-width="1.38" stroke-opacity="1.00" />
<polyline points="616.7,47.3 611.0,115.6" fill="none" stroke="#ffa000" stroke-width="1.15" stroke-opacity="1.00" />
<polyline points="788.8,88.7 775.0,191.0 764.5,199.6 754.0,204.8" fill="none" stroke="#ffa000" stroke-width="1.38" stroke-opacity="1.00" />
<polyline points="788.8,88.7 716.9,112.9" fill="none" stroke="#ffa000" stroke-width="1.49" stroke-opacity="1.00" />
<polyline points="786.0,92.5 717.0,116.0" fill="none" stroke="#ffa000" stroke-width="1.03" stroke-opacity="1.00" />
<polyline points="616.7,47.3 679.0,78.0 788.8,88.7" fill="none" stroke="#ffa000" stroke-width="1.03" stroke-opacity="1.00" />
<polyline points="616.7,47.3 746.5,129.0" fill="none" stroke="#ffa000" stroke-width="0.00" stroke-opacity="1.00" />
<polyline points="788.8,88.7 746.5,129.0" fill="none" stroke="#ffa000" stroke-width="1.03" stroke-opacity="1.00" />
<polyline points="616.7,47.3 640.0,62.0 716.9,112.9" fill="none" stroke="#ffa000" stroke-width="0.00" stroke-opacity="1.00" />
<polyline points="645.3,81.8 662.9,84.8 662.9,103.7 645.3,100.7 645.3,81.8" fill="none" stroke="#ffa000" stroke-width="1.61" stroke-opacity="1.00" />
<polyline points="654.1,83.3 654.1,102.2" fill="none" stroke="#ffa000" stroke-width="1.15" stroke-opacity="1.00" />
<polyline points="645.3,91.2 662.9,94.2" fill="none" stroke="#ffa000" stroke-width="1.15" stroke-opacity="1.00" />
<polyline points="756.0,121.0 769.5,117.5 769.5,132.5 756.0,136.0 756.0,121.0" fill="none" stroke="#ffa000" stroke-width="1.61" stroke-opacity="1.00" />
<polyline points="762.8,119.2 762.8,134.2" fill="none" stroke="#ffa000" stroke-width="1.15" stroke-opacity="1.00" />
<polyline points="756.0,128.5 769.5,125.0" fill="none" stroke="#ffa000" stroke-width="1.15" stroke-opacity="1.00" />
<polyline points="727.6,131.0 743.8,127.0 743.8,142.0 727.6,146.0 727.6,131.0" fill="none" stroke="#ffa000" stroke-width="1.61" stroke-opacity="1.00" />
<polyline points="735.7,129.0 735.7,144.0" fill="none" stroke="#ffa000" stroke-width="1.15" stroke-opacity="1.00" />
<polyline points="727.6,138.5 743.8,134.5" fill="none" stroke="#ffa000" stroke-width="1.15" stroke-opacity="1.00" />
<polyline points="781.9,139.0 859.9,179.9 853.0,184.5 778.4,161.5 781.9,139.0" fill="none" stroke="#ffa000" stroke-width="1.26" stroke-opacity="1.00" />
<polyline points="781.0,146.0 856.0,182.0" fill="none" stroke="#ffa000" stroke-width="0.92" stroke-opacity="1.00" />
<polygon points="719.4,137.5 777.2,135.1 781.9,139.0 778.4,161.5 772.6,157.1 705.5,150.2" fill="#ffa850" fill-opacity="0.280" />
<polyline points="719.4,137.5 777.2,135.1" fill="none" stroke="#ffa000" stroke-width="1.38" stroke-opacity="1.00" />
<polyline points="705.5,150.2 772.6,157.1" fill="none" stroke="#ffa000" stroke-width="1.38" stroke-opacity="1.00" />
<polyline points="719.4,137.5 705.5,150.2" fill="none" stroke="#ffa000" stroke-width="1.15" stroke-opacity="1.00" />
<polyline points="722.0,141.0 776.0,139.0" fill="none" stroke="#ffa000" stroke-width="1.03" stroke-opacity="0.80" />
<polygon points="630.2,308.8 707.5,271.7 707.9,267.8 630.5,304.7" fill="#ff9e50" fill-opacity="0.050" />
<polygon points="707.5,271.7 687.3,262.9 687.7,259.0 707.9,267.8" fill="#ff9e50" fill-opacity="0.050" />
<polygon points="630.5,304.7 707.9,267.8 687.7,259.0 610.4,294.5" fill="#ff9e50" fill-opacity="0.050" />
<polyline points="630.2,308.8 707.5,271.7" fill="none" stroke="#ffa000" stroke-width="1.72" stroke-opacity="0.95" />
<polyline points="707.5,271.7 687.3,262.9" fill="none" stroke="#ffa000" stroke-width="1.72" stroke-opacity="0.95" />
<polyline points="687.3,262.9 610.1,298.5" fill="none" stroke="#ffa000" stroke-width="1.72" stroke-opacity="0.95" />
<polyline points="610.1,298.5 630.2,308.8" fill="none" stroke="#ffa000" stroke-width="1.72" stroke-opacity="0.95" />
<polyline points="630.5,304.7 707.9,267.8" fill="none" stroke="#ffa000" stroke-width="1.72" stroke-opacity="0.95" />
<polyline points="707.9,267.8 687.7,259.0" fill="none" stroke="#ffa000" stroke-width="1.72" stroke-opacity="0.95" />
<polyline points="687.7,259.0 610.4,294.5" fill="none" stroke="#ffa000" stroke-width="1.72" stroke-opacity="0.95" />
<polyline points="610.4,294.5 630.5,304.7" fill="none" stroke="#ffa000" stroke-width="1.72" stroke-opacity="0.95" />
<polyline points="630.2,308.8 630.5,304.7" fill="none" stroke="#ffa000" stroke-width="1.72" stroke-opacity="0.95" />
<polyline points="707.5,271.7 707.9,267.8" fill="none" stroke="#ffa000" stroke-width="1.72" stroke-opacity="0.95" />
<polyline points="687.3,262.9 687.7,259.0" fill="none" stroke="#ffa000" stroke-width="1.72" stroke-opacity="0.95" />
<polyline points="610.1,298.5 610.4,294.5" fill="none" stroke="#ffa000" stroke-width="1.72" stroke-opacity="0.95" />
<circle cx="630.2" cy="308.8" r="1.2" fill="#ff8c14" fill-opacity="0.95"/>
<circle cx="707.5" cy="271.7" r="1.1" fill="#ff8c14" fill-opacity="0.95"/>
<circle cx="687.3" cy="262.9" r="1.5" fill="#ff8c14" fill-opacity="0.95"/>
<circle cx="610.1" cy="298.5" r="1.1" fill="#ff8c14" fill-opacity="0.95"/>
<circle cx="630.5" cy="304.7" r="1.4" fill="#ff8c14" fill-opacity="0.95"/>
<circle cx="707.9" cy="267.8" r="1.3" fill="#ff8c14" fill-opacity="0.95"/>
<circle cx="687.7" cy="259.0" r="1.0" fill="#ff8c14" fill-opacity="0.95"/>
<circle cx="610.4" cy="294.5" r="1.4" fill="#ff8c14" fill-opacity="0.95"/>
<polygon points="632.0,285.2 709.9,249.4 710.3,245.5 632.3,281.0" fill="#ff9e50" fill-opacity="0.050" />
<polygon points="709.9,249.4 689.5,240.9 689.8,237.0 710.3,245.5" fill="#ff9e50" fill-opacity="0.050" />
<polygon points="632.3,281.0 710.3,245.5 689.8,237.0 611.9,271.1" fill="#ff9e50" fill-opacity="0.050" />
<polyline points="632.0,285.2 709.9,249.4" fill="none" stroke="#ffa000" stroke-width="1.72" stroke-opacity="0.95" />
<polyline points="709.9,249.4 689.5,240.9" fill="none" stroke="#ffa000" stroke-width="1.72" stroke-opacity="0.95" />
<polyline points="689.5,240.9 611.6,275.3" fill="none" stroke="#ffa000" stroke-width="1.72" stroke-opacity="0.95" />
<polyline points="611.6,275.3 632.0,285.2" fill="none" stroke="#ffa000" stroke-width="1.72" stroke-opacity="0.95" />
<polyline points="632.3,281.0 710.3,245.5" fill="none" stroke="#ffa000" stroke-width="1.72" stroke-opacity="0.95" />
<polyline points="710.3,245.5 689.8,237.0" fill="none" stroke="#ffa000" stroke-width="1.72" stroke-opacity="0.95" />
<polyline points="689.8,237.0 611.9,271.1" fill="none" stroke="#ffa000" stroke-width="1.72" stroke-opacity="0.95" />
<polyline points="611.9,271.1 632.3,281.0" fill="none" stroke="#ffa000" stroke-width="1.72" stroke-opacity="0.95" />
<polyline points="632.0,285.2 632.3,281.0" fill="none" stroke="#ffa000" stroke-width="1.72" stroke-opacity="0.95" />
<polyline points="709.9,249.4 710.3,245.5" fill="none" stroke="#ffa000" stroke-width="1.72" stroke-opacity="0.95" />
<polyline points="689.5,240.9 689.8,237.0" fill="none" stroke="#ffa000" stroke-width="1.72" stroke-opacity="0.95" />
<polyline points="611.6,275.3 611.9,271.1" fill="none" stroke="#ffa000" stroke-width="1.72" stroke-opacity="0.95" />
<circle cx="632.0" cy="285.2" r="1.0" fill="#ff8c14" fill-opacity="0.95"/>
<circle cx="709.9" cy="249.4" r="1.3" fill="#ff8c14" fill-opacity="0.95"/>
<circle cx="689.5" cy="240.9" r="1.0" fill="#ff8c14" fill-opacity="0.95"/>
<circle cx="611.6" cy="275.3" r="1.1" fill="#ff8c14" fill-opacity="0.95"/>
<circle cx="632.3" cy="281.0" r="1.3" fill="#ff8c14" fill-opacity="0.95"/>
<circle cx="710.3" cy="245.5" r="1.6" fill="#ff8c14" fill-opacity="0.95"/>
<circle cx="689.8" cy="237.0" r="1.1" fill="#ff8c14" fill-opacity="0.95"/>
<circle cx="611.9" cy="271.1" r="1.2" fill="#ff8c14" fill-opacity="0.95"/>
<polygon points="633.8,261.1 712.3,226.7 712.7,222.7 634.1,256.8" fill="#ff9e50" fill-opacity="0.050" />
<polygon points="712.3,226.7 691.6,218.6 692.0,214.6 712.7,222.7" fill="#ff9e50" fill-opacity="0.050" />
<polygon points="634.1,256.8 712.7,222.7 692.0,214.6 613.5,247.4" fill="#ff9e50" fill-opacity="0.050" />
<polyline points="633.8,261.1 712.3,226.7" fill="none" stroke="#ffa000" stroke-width="1.72" stroke-opacity="0.95" />
<polyline points="712.3,226.7 691.6,218.6" fill="none" stroke="#ffa000" stroke-width="1.72" stroke-opacity="0.95" />
<polyline points="691.6,218.6 613.2,251.6" fill="none" stroke="#ffa000" stroke-width="1.72" stroke-opacity="0.95" />
<polyline points="613.2,251.6 633.8,261.1" fill="none" stroke="#ffa000" stroke-width="1.72" stroke-opacity="0.95" />
<polyline points="634.1,256.8 712.7,222.7" fill="none" stroke="#ffa000" stroke-width="1.72" stroke-opacity="0.95" />
<polyline points="712.7,222.7 692.0,214.6" fill="none" stroke="#ffa000" stroke-width="1.72" stroke-opacity="0.95" />
<polyline points="692.0,214.6 613.5,247.4" fill="none" stroke="#ffa000" stroke-width="1.72" stroke-opacity="0.95" />
<polyline points="613.5,247.4 634.1,256.8" fill="none" stroke="#ffa000" stroke-width="1.72" stroke-opacity="0.95" />
<polyline points="633.8,261.1 634.1,256.8" fill="none" stroke="#ffa000" stroke-width="1.72" stroke-opacity="0.95" />
<polyline points="712.3,226.7 712.7,222.7" fill="none" stroke="#ffa000" stroke-width="1.72" stroke-opacity="0.95" />
<polyline points="691.6,218.6 692.0,214.6" fill="none" stroke="#ffa000" stroke-width="1.72" stroke-opacity="0.95" />
<polyline points="613.2,251.6 613.5,247.4" fill="none" stroke="#ffa000" stroke-width="1.72" stroke-opacity="0.95" />
<circle cx="633.8" cy="261.1" r="1.4" fill="#ff8c14" fill-opacity="0.95"/>
<circle cx="712.3" cy="226.7" r="1.7" fill="#ff8c14" fill-opacity="0.95"/>
<circle cx="691.6" cy="218.6" r="1.4" fill="#ff8c14" fill-opacity="0.95"/>
<circle cx="613.2" cy="251.6" r="1.3" fill="#ff8c14" fill-opacity="0.95"/>
<circle cx="634.1" cy="256.8" r="1.7" fill="#ff8c14" fill-opacity="0.95"/>
<circle cx="712.7" cy="222.7" r="1.0" fill="#ff8c14" fill-opacity="0.95"/>
<circle cx="692.0" cy="214.6" r="1.6" fill="#ff8c14" fill-opacity="0.95"/>
<circle cx="613.5" cy="247.4" r="1.2" fill="#ff8c14" fill-opacity="0.95"/>
<polygon points="635.6,236.5 714.8,203.6 715.2,199.5 635.9,232.1" fill="#ff9e50" fill-opacity="0.050" />
<polygon points="714.8,203.6 693.9,195.8 694.2,191.8 715.2,199.5" fill="#ff9e50" fill-opacity="0.050" />
<polygon points="635.9,232.1 715.2,199.5 694.2,191.8 615.1,223.1" fill="#ff9e50" fill-opacity="0.050" />
<polyline points="635.6,236.5 714.8,203.6" fill="none" stroke="#ffa000" stroke-width="1.72" stroke-opacity="0.95" />
<polyline points="714.8,203.6 693.9,195.8" fill="none" stroke="#ffa000" stroke-width="1.72" stroke-opacity="0.95" />
<polyline points="693.9,195.8 614.8,227.4" fill="none" stroke="#ffa000" stroke-width="1.72" stroke-opacity="0.95" />
<polyline points="614.8,227.4 635.6,236.5" fill="none" stroke="#ffa000" stroke-width="1.72" stroke-opacity="0.95" />
<polyline points="635.9,232.1 715.2,199.5" fill="none" stroke="#ffa000" stroke-width="1.72" stroke-opacity="0.95" />
<polyline points="715.2,199.5 694.2,191.8" fill="none" stroke="#ffa000" stroke-width="1.72" stroke-opacity="0.95" />
<polyline points="694.2,191.8 615.1,223.1" fill="none" stroke="#ffa000" stroke-width="1.72" stroke-opacity="0.95" />
<polyline points="615.1,223.1 635.9,232.1" fill="none" stroke="#ffa000" stroke-width="1.72" stroke-opacity="0.95" />
<polyline points="635.6,236.5 635.9,232.1" fill="none" stroke="#ffa000" stroke-width="1.72" stroke-opacity="0.95" />
<polyline points="714.8,203.6 715.2,199.5" fill="none" stroke="#ffa000" stroke-width="1.72" stroke-opacity="0.95" />
<polyline points="693.9,195.8 694.2,191.8" fill="none" stroke="#ffa000" stroke-width="1.72" stroke-opacity="0.95" />
<polyline points="614.8,227.4 615.1,223.1" fill="none" stroke="#ffa000" stroke-width="1.72" stroke-opacity="0.95" />
<circle cx="635.6" cy="236.5" r="1.1" fill="#ff8c14" fill-opacity="0.95"/>
<circle cx="714.8" cy="203.6" r="1.1" fill="#ff8c14" fill-opacity="0.95"/>
<circle cx="693.9" cy="195.8" r="1.2" fill="#ff8c14" fill-opacity="0.95"/>
<circle cx="614.8" cy="227.4" r="1.6" fill="#ff8c14" fill-opacity="0.95"/>
<circle cx="635.9" cy="232.1" r="1.1" fill="#ff8c14" fill-opacity="0.95"/>
<circle cx="715.2" cy="199.5" r="1.4" fill="#ff8c14" fill-opacity="0.95"/>
<circle cx="694.2" cy="191.8" r="1.4" fill="#ff8c14" fill-opacity="0.95"/>
<circle cx="615.1" cy="223.1" r="1.3" fill="#ff8c14" fill-opacity="0.95"/>
<polygon points="637.4,212.8 717.1,181.4 717.6,177.2 637.7,208.4" fill="#ff9e50" fill-opacity="0.050" />
<polygon points="717.1,181.4 696.0,174.0 696.4,169.9 717.6,177.2" fill="#ff9e50" fill-opacity="0.050" />
<polygon points="637.7,208.4 717.6,177.2 696.4,169.9 616.6,199.8" fill="#ff9e50" fill-opacity="0.050" />
<polyline points="637.4,212.8 717.1,181.4" fill="none" stroke="#ffa000" stroke-width="1.72" stroke-opacity="0.95" />
<polyline points="717.1,181.4 696.0,174.0" fill="none" stroke="#ffa000" stroke-width="1.72" stroke-opacity="0.95" />
<polyline points="696.0,174.0 616.3,204.2" fill="none" stroke="#ffa000" stroke-width="1.72" stroke-opacity="0.95" />
<polyline points="616.3,204.2 637.4,212.8" fill="none" stroke="#ffa000" stroke-width="1.72" stroke-opacity="0.95" />
<polyline points="637.7,208.4 717.6,177.2" fill="none" stroke="#ffa000" stroke-width="1.72" stroke-opacity="0.95" />
<polyline points="717.6,177.2 696.4,169.9" fill="none" stroke="#ffa000" stroke-width="1.72" stroke-opacity="0.95" />
<polyline points="696.4,169.9 616.6,199.8" fill="none" stroke="#ffa000" stroke-width="1.72" stroke-opacity="0.95" />
<polyline points="616.6,199.8 637.7,208.4" fill="none" stroke="#ffa000" stroke-width="1.72" stroke-opacity="0.95" />
<polyline points="637.4,212.8 637.7,208.4" fill="none" stroke="#ffa000" stroke-width="1.72" stroke-opacity="0.95" />
<polyline points="717.1,181.4 717.6,177.2" fill="none" stroke="#ffa000" stroke-width="1.72" stroke-opacity="0.95" />
<polyline points="696.0,174.0 696.4,169.9" fill="none" stroke="#ffa000" stroke-width="1.72" stroke-opacity="0.95" />
<polyline points="616.3,204.2 616.6,199.8" fill="none" stroke="#ffa000" stroke-width="1.72" stroke-opacity="0.95" />
<circle cx="637.4" cy="212.8" r="1.4" fill="#ff8c14" fill-opacity="0.95"/>
<circle cx="717.1" cy="181.4" r="1.0" fill="#ff8c14" fill-opacity="0.95"/>
<circle cx="696.0" cy="174.0" r="1.0" fill="#ff8c14" fill-opacity="0.95"/>
<circle cx="616.3" cy="204.2" r="1.1" fill="#ff8c14" fill-opacity="0.95"/>
<circle cx="637.7" cy="208.4" r="1.5" fill="#ff8c14" fill-opacity="0.95"/>
<circle cx="717.6" cy="177.2" r="1.3" fill="#ff8c14" fill-opacity="0.95"/>
<circle cx="696.4" cy="169.9" r="1.2" fill="#ff8c14" fill-opacity="0.95"/>
<circle cx="616.6" cy="199.8" r="1.4" fill="#ff8c14" fill-opacity="0.95"/>
<polyline points="630.2,308.8 637.8,206.9" fill="none" stroke="#ffa520" stroke-width="1.72" stroke-opacity="0.95" />
<circle cx="630.2" cy="308.8" r="1.4" fill="#ff8a10" fill-opacity="1.00"/>
<circle cx="637.8" cy="206.9" r="1.4" fill="#ff8a10" fill-opacity="1.00"/>
<polyline points="608.5,323.9 617.6,183.5" fill="none" stroke="#ffa520" stroke-width="1.38" stroke-opacity="0.80" />
<circle cx="608.5" cy="323.9" r="1.4" fill="#ff8a10" fill-opacity="1.00"/>
<circle cx="617.6" cy="183.5" r="1.4" fill="#ff8a10" fill-opacity="1.00"/>
<polyline points="643.9,302.3 652.0,201.3" fill="none" stroke="#ffa520" stroke-width="1.72" stroke-opacity="0.95" />
<circle cx="643.9" cy="302.3" r="1.4" fill="#ff8a10" fill-opacity="1.00"/>
<circle cx="652.0" cy="201.3" r="1.4" fill="#ff8a10" fill-opacity="1.00"/>
<polyline points="622.0,317.4 631.9,178.4" fill="none" stroke="#ffa520" stroke-width="1.38" stroke-opacity="0.80" />
<circle cx="622.0" cy="317.4" r="1.4" fill="#ff8a10" fill-opacity="1.00"/>
<circle cx="631.9" cy="178.4" r="1.4" fill="#ff8a10" fill-opacity="1.00"/>
<polyline points="657.3,295.8 665.8,196.0" fill="none" stroke="#ffa520" stroke-width="1.72" stroke-opacity="0.95" />
<circle cx="657.3" cy="295.8" r="1.4" fill="#ff8a10" fill-opacity="1.00"/>
<circle cx="665.8" cy="196.0" r="1.4" fill="#ff8a10" fill-opacity="1.00"/>
<polyline points="635.2,311.0 645.8,173.4" fill="none" stroke="#ffa520" stroke-width="1.38" stroke-opacity="0.80" />
<circle cx="635.2" cy="311.0" r="1.4" fill="#ff8a10" fill-opacity="1.00"/>
<circle cx="645.8" cy="173.4" r="1.4" fill="#ff8a10" fill-opacity="1.00"/>
<polyline points="670.3,289.6 679.3,190.7" fill="none" stroke="#ffa520" stroke-width="1.72" stroke-opacity="0.95" />
<circle cx="670.3" cy="289.6" r="1.4" fill="#ff8a10" fill-opacity="1.00"/>
<circle cx="679.3" cy="190.7" r="1.4" fill="#ff8a10" fill-opacity="1.00"/>
<polyline points="648.1,304.7 659.3,168.5" fill="none" stroke="#ffa520" stroke-width="1.38" stroke-opacity="0.80" />
<circle cx="648.1" cy="304.7" r="1.4" fill="#ff8a10" fill-opacity="1.00"/>
<circle cx="659.3" cy="168.5" r="1.4" fill="#ff8a10" fill-opacity="1.00"/>
<polyline points="683.0,283.5 692.4,185.6" fill="none" stroke="#ffa520" stroke-width="1.72" stroke-opacity="0.95" />
<circle cx="683.0" cy="283.5" r="1.4" fill="#ff8a10" fill-opacity="1.00"/>
<circle cx="692.4" cy="185.6" r="1.4" fill="#ff8a10" fill-opacity="1.00"/>
<polyline points="660.7,298.7 672.5,163.8" fill="none" stroke="#ffa520" stroke-width="1.38" stroke-opacity="0.80" />
<circle cx="660.7" cy="298.7" r="1.4" fill="#ff8a10" fill-opacity="1.00"/>
<circle cx="672.5" cy="163.8" r="1.4" fill="#ff8a10" fill-opacity="1.00"/>
<polyline points="695.4,277.5 705.2,180.6" fill="none" stroke="#ffa520" stroke-width="1.72" stroke-opacity="0.95" />
<circle cx="695.4" cy="277.5" r="1.4" fill="#ff8a10" fill-opacity="1.00"/>
<circle cx="705.2" cy="180.6" r="1.4" fill="#ff8a10" fill-opacity="1.00"/>
<polyline points="673.0,292.7 685.3,159.1" fill="none" stroke="#ffa520" stroke-width="1.38" stroke-opacity="0.80" />
<circle cx="673.0" cy="292.7" r="1.4" fill="#ff8a10" fill-opacity="1.00"/>
<circle cx="685.3" cy="159.1" r="1.4" fill="#ff8a10" fill-opacity="1.00"/>
<polyline points="707.5,271.7 717.7,175.8" fill="none" stroke="#ffa520" stroke-width="1.72" stroke-opacity="0.95" />
<circle cx="707.5" cy="271.7" r="1.4" fill="#ff8a10" fill-opacity="1.00"/>
<circle cx="717.7" cy="175.8" r="1.4" fill="#ff8a10" fill-opacity="1.00"/>
<polyline points="685.0,286.9 697.9,154.6" fill="none" stroke="#ffa520" stroke-width="1.38" stroke-opacity="0.80" />
<circle cx="685.0" cy="286.9" r="1.4" fill="#ff8a10" fill-opacity="1.00"/>
<circle cx="697.9" cy="154.6" r="1.4" fill="#ff8a10" fill-opacity="1.00"/>
<polyline points="659.8,294.6 661.1,279.7" fill="none" stroke="#ffa520" stroke-width="1.95" stroke-opacity="0.95" />
<polyline points="661.8,271.5 663.0,257.7" fill="none" stroke="#ffa520" stroke-width="1.15" stroke-opacity="0.80" />
<polyline points="664.3,292.5 665.6,277.6" fill="none" stroke="#ffa520" stroke-width="1.95" stroke-opacity="0.95" />
<polyline points="666.4,269.4 667.6,255.7" fill="none" stroke="#ffa520" stroke-width="1.15" stroke-opacity="0.80" />
<polyline points="668.8,290.3 670.1,275.5" fill="none" stroke="#ffa520" stroke-width="1.95" stroke-opacity="0.95" />
<polyline points="670.9,267.3 672.1,253.6" fill="none" stroke="#ffa520" stroke-width="1.15" stroke-opacity="0.80" />
<polyline points="673.3,288.2 674.6,273.4" fill="none" stroke="#ffa520" stroke-width="1.95" stroke-opacity="0.95" />
<polyline points="675.4,265.3 676.6,251.6" fill="none" stroke="#ffa520" stroke-width="1.15" stroke-opacity="0.80" />
<polyline points="677.7,286.1 679.0,271.4" fill="none" stroke="#ffa520" stroke-width="1.95" stroke-opacity="0.95" />
<polyline points="679.8,263.3 681.1,249.6" fill="none" stroke="#ffa520" stroke-width="1.15" stroke-opacity="0.80" />
<polyline points="682.0,284.0 683.4,269.3" fill="none" stroke="#ffa520" stroke-width="1.95" stroke-opacity="0.95" />
<polyline points="684.2,261.2 685.5,247.7" fill="none" stroke="#ffa520" stroke-width="1.15" stroke-opacity="0.80" />
<polyline points="686.4,281.9 687.8,267.3" fill="none" stroke="#ffa520" stroke-width="1.95" stroke-opacity="0.95" />
<polyline points="688.6,259.2 689.9,245.7" fill="none" stroke="#ffa520" stroke-width="1.15" stroke-opacity="0.80" />
<polyline points="690.7,279.8 692.1,265.3" fill="none" stroke="#ffa520" stroke-width="1.95" stroke-opacity="0.95" />
<polyline points="692.9,257.2 694.3,243.7" fill="none" stroke="#ffa520" stroke-width="1.15" stroke-opacity="0.80" />
<polyline points="694.9,277.8 696.4,263.3" fill="none" stroke="#ffa520" stroke-width="1.95" stroke-opacity="0.95" />
<polyline points="697.2,255.3 698.6,241.8" fill="none" stroke="#ffa520" stroke-width="1.15" stroke-opacity="0.80" />
<polyline points="699.2,275.7 700.7,261.3" fill="none" stroke="#ffa520" stroke-width="1.95" stroke-opacity="0.95" />
<polyline points="701.5,253.3 702.9,239.9" fill="none" stroke="#ffa520" stroke-width="1.15" stroke-opacity="0.80" />
<polyline points="703.4,273.7 704.9,259.3" fill="none" stroke="#ffa520" stroke-width="1.95" stroke-opacity="0.95" />
<polyline points="705.7,251.4 707.1,238.0" fill="none" stroke="#ffa520" stroke-width="1.15" stroke-opacity="0.80" />
<polyline points="707.5,271.7 709.1,257.4" fill="none" stroke="#ffa520" stroke-width="1.95" stroke-opacity="0.95" />
<polyline points="709.9,249.4 711.3,236.1" fill="none" stroke="#ffa520" stroke-width="1.15" stroke-opacity="0.80" />
<polyline points="653.6,289.8 708.4,263.9" fill="none" stroke="#ffa520" stroke-width="1.61" stroke-opacity="0.95" />
<polyline points="654.1,283.0 709.1,257.4" fill="none" stroke="#ffa520" stroke-width="1.61" stroke-opacity="0.95" />
<polyline points="656.0,260.8 711.3,236.1" fill="none" stroke="#ffa520" stroke-width="1.61" stroke-opacity="0.95" />
<polygon points="625.4,336.1 649.4,324.1 652.8,283.6 628.4,295.0" fill="#ff9e50" fill-opacity="0.080" />
<polygon points="649.4,324.1 629.5,313.8 632.5,274.0 652.8,283.6" fill="#ff9e50" fill-opacity="0.080" />
<polygon points="628.4,295.0 652.8,283.6 632.5,274.0 608.2,284.9" fill="#ff9e50" fill-opacity="0.080" />
<polyline points="625.4,336.1 649.4,324.1" fill="none" stroke="#ffa000" stroke-width="1.61" stroke-opacity="0.95" />
<polyline points="649.4,324.1 629.5,313.8" fill="none" stroke="#ffa000" stroke-width="1.61" stroke-opacity="0.95" />
<polyline points="629.5,313.8 605.6,325.3" fill="none" stroke="#ffa000" stroke-width="1.61" stroke-opacity="0.95" />
<polyline points="605.6,325.3 625.4,336.1" fill="none" stroke="#ffa000" stroke-width="1.61" stroke-opacity="0.95" />
<polyline points="628.4,295.0 652.8,283.6" fill="none" stroke="#ffa000" stroke-width="1.61" stroke-opacity="0.95" />
<polyline points="652.8,283.6 632.5,274.0" fill="none" stroke="#ffa000" stroke-width="1.61" stroke-opacity="0.95" />
<polyline points="632.5,274.0 608.2,284.9" fill="none" stroke="#ffa000" stroke-width="1.61" stroke-opacity="0.95" />
<polyline points="608.2,284.9 628.4,295.0" fill="none" stroke="#ffa000" stroke-width="1.61" stroke-opacity="0.95" />
<polyline points="625.4,336.1 628.4,295.0" fill="none" stroke="#ffa000" stroke-width="1.61" stroke-opacity="0.95" />
<polyline points="649.4,324.1 652.8,283.6" fill="none" stroke="#ffa000" stroke-width="1.61" stroke-opacity="0.95" />
<polyline points="629.5,313.8 632.5,274.0" fill="none" stroke="#ffa000" stroke-width="1.61" stroke-opacity="0.95" />
<polyline points="605.6,325.3 608.2,284.9" fill="none" stroke="#ffa000" stroke-width="1.61" stroke-opacity="0.95" />
<circle cx="625.4" cy="336.1" r="1.3" fill="#ff8c14" fill-opacity="0.95"/>
<circle cx="649.4" cy="324.1" r="1.2" fill="#ff8c14" fill-opacity="0.95"/>
<circle cx="629.5" cy="313.8" r="1.6" fill="#ff8c14" fill-opacity="0.95"/>
<circle cx="605.6" cy="325.3" r="1.5" fill="#ff8c14" fill-opacity="0.95"/>
<circle cx="628.4" cy="295.0" r="1.2" fill="#ff8c14" fill-opacity="0.95"/>
<circle cx="652.8" cy="283.6" r="1.4" fill="#ff8c14" fill-opacity="0.95"/>
<circle cx="632.5" cy="274.0" r="1.4" fill="#ff8c14" fill-opacity="0.95"/>
<circle cx="608.2" cy="284.9" r="1.6" fill="#ff8c14" fill-opacity="0.95"/>
<polygon points="649.4,324.1 665.7,315.9 668.8,281.3 652.3,289.1" fill="#ff9e50" fill-opacity="0.080" />
<polygon points="665.7,315.9 652.3,309.2 655.2,275.0 668.8,281.3" fill="#ff9e50" fill-opacity="0.080" />
<polygon points="652.3,289.1 668.8,281.3 655.2,275.0 638.7,282.5" fill="#ff9e50" fill-opacity="0.080" />
<polyline points="649.4,324.1 665.7,315.9" fill="none" stroke="#ffa000" stroke-width="1.61" stroke-opacity="0.95" />
<polyline points="665.7,315.9 652.3,309.2" fill="none" stroke="#ffa000" stroke-width="1.61" stroke-opacity="0.95" />
<polyline points="652.3,309.2 636.0,317.1" fill="none" stroke="#ffa000" stroke-width="1.61" stroke-opacity="0.95" />
<polyline points="636.0,317.1 649.4,324.1" fill="none" stroke="#ffa000" stroke-width="1.61" stroke-opacity="0.95" />
<polyline points="652.3,289.1 668.8,281.3" fill="none" stroke="#ffa000" stroke-width="1.61" stroke-opacity="0.95" />
<polyline points="668.8,281.3 655.2,275.0" fill="none" stroke="#ffa000" stroke-width="1.61" stroke-opacity="0.95" />
<polyline points="655.2,275.0 638.7,282.5" fill="none" stroke="#ffa000" stroke-width="1.61" stroke-opacity="0.95" />
<polyline points="638.7,282.5 652.3,289.1" fill="none" stroke="#ffa000" stroke-width="1.61" stroke-opacity="0.95" />
<polyline points="649.4,324.1 652.3,289.1" fill="none" stroke="#ffa000" stroke-width="1.61" stroke-opacity="0.95" />
<polyline points="665.7,315.9 668.8,281.3" fill="none" stroke="#ffa000" stroke-width="1.61" stroke-opacity="0.95" />
<polyline points="652.3,309.2 655.2,275.0" fill="none" stroke="#ffa000" stroke-width="1.61" stroke-opacity="0.95" />
<polyline points="636.0,317.1 638.7,282.5" fill="none" stroke="#ffa000" stroke-width="1.61" stroke-opacity="0.95" />
<circle cx="649.4" cy="324.1" r="1.5" fill="#ff8c14" fill-opacity="0.95"/>
<circle cx="665.7" cy="315.9" r="1.2" fill="#ff8c14" fill-opacity="0.95"/>
<circle cx="652.3" cy="309.2" r="1.7" fill="#ff8c14" fill-opacity="0.95"/>
<circle cx="636.0" cy="317.1" r="1.1" fill="#ff8c14" fill-opacity="0.95"/>
<circle cx="652.3" cy="289.1" r="1.3" fill="#ff8c14" fill-opacity="0.95"/>
<circle cx="668.8" cy="281.3" r="1.5" fill="#ff8c14" fill-opacity="0.95"/>
<circle cx="655.2" cy="275.0" r="1.1" fill="#ff8c14" fill-opacity="0.95"/>
<circle cx="638.7" cy="282.5" r="1.3" fill="#ff8c14" fill-opacity="0.95"/>
<polygon points="660.6,313.3 699.9,293.8 702.4,269.5 662.8,288.3" fill="#ffc090" fill-opacity="0.100" />
<polygon points="699.9,293.8 664.2,277.3 666.3,253.6 702.4,269.5" fill="#ffc090" fill-opacity="0.100" />
<polygon points="662.8,288.3 702.4,269.5 666.3,253.6 626.8,271.2" fill="#ffc090" fill-opacity="0.100" />
<polyline points="660.6,313.3 699.9,293.8" fill="none" stroke="#ffa000" stroke-width="1.61" stroke-opacity="0.95" />
<polyline points="699.9,293.8 664.2,277.3" fill="none" stroke="#ffa000" stroke-width="1.61" stroke-opacity="0.95" />
<polyline points="664.2,277.3 625.1,295.5" fill="none" stroke="#ffa000" stroke-width="1.61" stroke-opacity="0.95" />
<polyline points="625.1,295.5 660.6,313.3" fill="none" stroke="#ffa000" stroke-width="1.61" stroke-opacity="0.95" />
<polyline points="662.8,288.3 702.4,269.5" fill="none" stroke="#ffa000" stroke-width="1.61" stroke-opacity="0.95" />
<polyline points="702.4,269.5 666.3,253.6" fill="none" stroke="#ffa000" stroke-width="1.61" stroke-opacity="0.95" />
<polyline points="666.3,253.6 626.8,271.2" fill="none" stroke="#ffa000" stroke-width="1.61" stroke-opacity="0.95" />
<polyline points="626.8,271.2 662.8,288.3" fill="none" stroke="#ffa000" stroke-width="1.61" stroke-opacity="0.95" />
<polyline points="660.6,313.3 662.8,288.3" fill="none" stroke="#ffa000" stroke-width="1.61" stroke-opacity="0.95" />
<polyline points="699.9,293.8 702.4,269.5" fill="none" stroke="#ffa000" stroke-width="1.61" stroke-opacity="0.95" />
<polyline points="664.2,277.3 666.3,253.6" fill="none" stroke="#ffa000" stroke-width="1.61" stroke-opacity="0.95" />
<polyline points="625.1,295.5 626.8,271.2" fill="none" stroke="#ffa000" stroke-width="1.61" stroke-opacity="0.95" />
<circle cx="660.6" cy="313.3" r="1.0" fill="#ff8c14" fill-opacity="0.95"/>
<circle cx="699.9" cy="293.8" r="1.5" fill="#ff8c14" fill-opacity="0.95"/>
<circle cx="664.2" cy="277.3" r="1.5" fill="#ff8c14" fill-opacity="0.95"/>
<circle cx="625.1" cy="295.5" r="1.4" fill="#ff8c14" fill-opacity="0.95"/>
<circle cx="662.8" cy="288.3" r="1.6" fill="#ff8c14" fill-opacity="0.95"/>
<circle cx="702.4" cy="269.5" r="1.2" fill="#ff8c14" fill-opacity="0.95"/>
<circle cx="666.3" cy="253.6" r="1.5" fill="#ff8c14" fill-opacity="0.95"/>
<circle cx="626.8" cy="271.2" r="1.4" fill="#ff8c14" fill-opacity="0.95"/>
<polyline points="639.7,205.0 628.9,331.0" fill="none" stroke="#ffa000" stroke-width="3.68" stroke-opacity="0.90" />
<polyline points="634.0,196.0 624.0,334.0" fill="none" stroke="#ffa000" stroke-width="1.61" stroke-opacity="1.00" />
<polygon points="597.2,148.5 631.8,159.0 628.7,197.9 594.8,185.5" fill="#ff9e50" fill-opacity="0.120" />
<polygon points="607.2,142.5 641.8,153.0 638.7,191.9 604.8,179.5" fill="#ff9e50" fill-opacity="0.072" />
<polyline points="597.2,148.5 631.8,159.0 628.7,197.9 594.8,185.5 597.2,148.5" fill="none" stroke="#ffa000" stroke-width="1.15" stroke-opacity="0.85" />
<polyline points="607.2,142.5 641.8,153.0 638.7,191.9 604.8,179.5 607.2,142.5" fill="none" stroke="#ffa000" stroke-width="0.92" stroke-opacity="0.68" />
<polyline points="597.2,148.5 607.2,142.5" fill="none" stroke="#ffa000" stroke-width="0.92" stroke-opacity="0.68" />
<polyline points="631.8,159.0 641.8,153.0" fill="none" stroke="#ffa000" stroke-width="0.92" stroke-opacity="0.68" />
<polyline points="628.7,197.9 638.7,191.9" fill="none" stroke="#ffa000" stroke-width="0.92" stroke-opacity="0.68" />
<polyline points="594.8,185.5 604.8,179.5" fill="none" stroke="#ffa000" stroke-width="0.92" stroke-opacity="0.68" />
<circle cx="624.4" cy="166.3" r="1.4" fill="#ff8a10" fill-opacity="1.00"/>
<circle cx="627.0" cy="153.9" r="1.8" fill="#ff8a10" fill-opacity="1.00"/>
<circle cx="628.6" cy="164.1" r="1.0" fill="#ff8a10" fill-opacity="1.00"/>
<circle cx="613.9" cy="159.4" r="1.6" fill="#ff8a10" fill-opacity="1.00"/>
<circle cx="605.0" cy="153.9" r="1.1" fill="#ff8a10" fill-opacity="1.00"/>
<circle cx="620.1" cy="169.1" r="1.7" fill="#ff8a10" fill-opacity="1.00"/>
<circle cx="609.3" cy="161.7" r="1.8" fill="#ff8a10" fill-opacity="1.00"/>
<circle cx="604.3" cy="155.3" r="1.4" fill="#ff8a10" fill-opacity="1.00"/>
<circle cx="616.9" cy="162.2" r="1.3" fill="#ff8a10" fill-opacity="1.00"/>
<circle cx="621.0" cy="187.6" r="1.5" fill="#ff8a10" fill-opacity="1.00"/>
<circle cx="629.4" cy="153.0" r="1.7" fill="#ff8a10" fill-opacity="1.00"/>
<circle cx="627.6" cy="171.4" r="1.5" fill="#ff8a10" fill-opacity="1.00"/>
<circle cx="601.3" cy="150.7" r="1.3" fill="#ff8a10" fill-opacity="1.00"/>
<circle cx="600.5" cy="148.5" r="1.3" fill="#ff8a10" fill-opacity="1.00"/>
<circle cx="602.1" cy="180.3" r="1.2" fill="#ff8a10" fill-opacity="1.00"/>
<circle cx="609.5" cy="160.8" r="1.8" fill="#ff8a10" fill-opacity="1.00"/>
<circle cx="612.9" cy="171.1" r="1.3" fill="#ff8a10" fill-opacity="1.00"/>
<circle cx="605.8" cy="182.2" r="1.8" fill="#ff8a10" fill-opacity="1.00"/>
<circle cx="620.5" cy="159.5" r="1.4" fill="#ff8a10" fill-opacity="1.00"/>
<circle cx="635.4" cy="190.8" r="1.3" fill="#ff8a10" fill-opacity="1.00"/>
<circle cx="606.4" cy="174.4" r="1.3" fill="#ff8a10" fill-opacity="1.00"/>
<circle cx="612.7" cy="176.1" r="1.6" fill="#ff8a10" fill-opacity="1.00"/>
<circle cx="625.6" cy="182.5" r="1.3" fill="#ff8a10" fill-opacity="1.00"/>
<circle cx="600.9" cy="148.3" r="1.6" fill="#ff8a10" fill-opacity="1.00"/>
<circle cx="638.3" cy="170.0" r="1.8" fill="#ff8a10" fill-opacity="1.00"/>
<circle cx="611.5" cy="159.5" r="1.2" fill="#ff8a10" fill-opacity="1.00"/>
<circle cx="624.6" cy="186.6" r="1.5" fill="#ff8a10" fill-opacity="1.00"/>
<circle cx="631.2" cy="154.7" r="1.6" fill="#ff8a10" fill-opacity="1.00"/>
<circle cx="623.5" cy="170.0" r="1.3" fill="#ff8a10" fill-opacity="1.00"/>
<circle cx="626.0" cy="191.9" r="1.8" fill="#ff8a10" fill-opacity="1.00"/>
<circle cx="623.1" cy="161.7" r="1.7" fill="#ff8a10" fill-opacity="1.00"/>
<circle cx="632.9" cy="156.7" r="1.5" fill="#ff8a10" fill-opacity="1.00"/>
<circle cx="609.2" cy="172.8" r="1.8" fill="#ff8a10" fill-opacity="1.00"/>
<circle cx="627.5" cy="172.9" r="1.7" fill="#ff8a10" fill-opacity="1.00"/>
<circle cx="627.7" cy="163.6" r="1.2" fill="#ff8a10" fill-opacity="1.00"/>
<circle cx="621.0" cy="163.8" r="1.7" fill="#ff8a10" fill-opacity="1.00"/>
<circle cx="614.1" cy="164.0" r="1.3" fill="#ff8a10" fill-opacity="1.00"/>
<circle cx="632.7" cy="174.4" r="1.0" fill="#ff8a10" fill-opacity="1.00"/>
<circle cx="612.0" cy="155.3" r="1.1" fill="#ff8a10" fill-opacity="1.00"/>
<circle cx="617.2" cy="179.0" r="1.4" fill="#ff8a10" fill-opacity="1.00"/>
<circle cx="615.3" cy="180.8" r="1.2" fill="#ff8a10" fill-opacity="1.00"/>
<circle cx="609.9" cy="177.0" r="1.6" fill="#ff8a10" fill-opacity="1.00"/>
<circle cx="633.6" cy="172.2" r="1.4" fill="#ff8a10" fill-opacity="1.00"/>
<circle cx="625.2" cy="170.2" r="1.8" fill="#ff8a10" fill-opacity="1.00"/>
<circle cx="628.3" cy="187.9" r="1.4" fill="#ff8a10" fill-opacity="1.00"/>
<polygon points="585.5,204.0 636.4,212.0 636.4,255.0 585.5,243.0" fill="#ffc890" fill-opacity="0.140" />
<polygon points="571.5,213.0 622.4,221.0 622.4,264.0 571.5,252.0" fill="#ffc890" fill-opacity="0.084" />
<polyline points="585.5,204.0 636.4,212.0 636.4,255.0 585.5,243.0 585.5,204.0" fill="none" stroke="#ffa000" stroke-width="1.15" stroke-opacity="0.70" />
<polyline points="571.5,213.0 622.4,221.0 622.4,264.0 571.5,252.0 571.5,213.0" fill="none" stroke="#ffa000" stroke-width="0.92" stroke-opacity="0.56" />
<polyline points="585.5,204.0 571.5,213.0" fill="none" stroke="#ffa000" stroke-width="0.92" stroke-opacity="0.56" />
<polyline points="636.4,212.0 622.4,221.0" fill="none" stroke="#ffa000" stroke-width="0.92" stroke-opacity="0.56" />
<polyline points="636.4,255.0 622.4,264.0" fill="none" stroke="#ffa000" stroke-width="0.92" stroke-opacity="0.56" />
<polyline points="585.5,243.0 571.5,252.0" fill="none" stroke="#ffa000" stroke-width="0.92" stroke-opacity="0.56" />
<circle cx="631.6" cy="248.6" r="1.4" fill="#ff8a10" fill-opacity="1.00"/>
<circle cx="588.2" cy="220.1" r="1.6" fill="#ff8a10" fill-opacity="1.00"/>
<circle cx="621.1" cy="223.7" r="1.1" fill="#ff8a10" fill-opacity="1.00"/>
<circle cx="627.4" cy="260.8" r="1.3" fill="#ff8a10" fill-opacity="1.00"/>
<circle cx="598.6" cy="249.9" r="1.3" fill="#ff8a10" fill-opacity="1.00"/>
<circle cx="609.0" cy="224.9" r="1.6" fill="#ff8a10" fill-opacity="1.00"/>
<polygon points="707.5,271.7 740.7,255.8 745.5,215.9 711.9,230.8" fill="#ff9e50" fill-opacity="0.100" />
<polygon points="740.7,255.8 688.6,234.4 692.3,196.2 745.5,215.9" fill="#ff9e50" fill-opacity="0.100" />
<polygon points="711.9,230.8 745.5,215.9 692.3,196.2 658.6,209.6" fill="#ff9e50" fill-opacity="0.100" />
<polyline points="707.5,271.7 740.7,255.8" fill="none" stroke="#ffa000" stroke-width="1.61" stroke-opacity="0.95" />
<polyline points="740.7,255.8 688.6,234.4" fill="none" stroke="#ffa000" stroke-width="1.61" stroke-opacity="0.95" />
<polyline points="688.6,234.4 655.4,248.8" fill="none" stroke="#ffa000" stroke-width="1.61" stroke-opacity="0.95" />
<polyline points="655.4,248.8 707.5,271.7" fill="none" stroke="#ffa000" stroke-width="1.61" stroke-opacity="0.95" />
<polyline points="711.9,230.8 745.5,215.9" fill="none" stroke="#ffa000" stroke-width="1.61" stroke-opacity="0.95" />
<polyline points="745.5,215.9 692.3,196.2" fill="none" stroke="#ffa000" stroke-width="1.61" stroke-opacity="0.95" />
<polyline points="692.3,196.2 658.6,209.6" fill="none" stroke="#ffa000" stroke-width="1.61" stroke-opacity="0.95" />
<polyline points="658.6,209.6 711.9,230.8" fill="none" stroke="#ffa000" stroke-width="1.61" stroke-opacity="0.95" />
<polyline points="707.5,271.7 711.9,230.8" fill="none" stroke="#ffa000" stroke-width="1.61" stroke-opacity="0.95" />
<polyline points="740.7,255.8 745.5,215.9" fill="none" stroke="#ffa000" stroke-width="1.61" stroke-opacity="0.95" />
<polyline points="688.6,234.4 692.3,196.2" fill="none" stroke="#ffa000" stroke-width="1.61" stroke-opacity="0.95" />
<polyline points="655.4,248.8 658.6,209.6" fill="none" stroke="#ffa000" stroke-width="1.61" stroke-opacity="0.95" />
<circle cx="707.5" cy="271.7" r="1.0" fill="#ff8c14" fill-opacity="0.95"/>
<circle cx="740.7" cy="255.8" r="1.4" fill="#ff8c14" fill-opacity="0.95"/>
<circle cx="688.6" cy="234.4" r="1.3" fill="#ff8c14" fill-opacity="0.95"/>
<circle cx="655.4" cy="248.8" r="1.0" fill="#ff8c14" fill-opacity="0.95"/>
<circle cx="711.9" cy="230.8" r="1.2" fill="#ff8c14" fill-opacity="0.95"/>
<circle cx="745.5" cy="215.9" r="1.4" fill="#ff8c14" fill-opacity="0.95"/>
<circle cx="692.3" cy="196.2" r="1.4" fill="#ff8c14" fill-opacity="0.95"/>
<circle cx="658.6" cy="209.6" r="1.0" fill="#ff8c14" fill-opacity="0.95"/>
<polygon points="711.9,230.8 746.7,215.4 750.5,183.7 715.4,198.1" fill="#ff9e50" fill-opacity="0.080" />
<polygon points="746.7,215.4 693.5,195.7 696.4,165.3 750.5,183.7" fill="#ff9e50" fill-opacity="0.080" />
<polygon points="715.4,198.1 750.5,183.7 696.4,165.3 661.2,178.3" fill="#ff9e50" fill-opacity="0.080" />
<polyline points="711.9,230.8 746.7,215.4" fill="none" stroke="#ffa000" stroke-width="1.61" stroke-opacity="0.95" />
<polyline points="746.7,215.4 693.5,195.7" fill="none" stroke="#ffa000" stroke-width="1.61" stroke-opacity="0.95" />
<polyline points="693.5,195.7 658.6,209.6" fill="none" stroke="#ffa000" stroke-width="1.61" stroke-opacity="0.95" />
<polyline points="658.6,209.6 711.9,230.8" fill="none" stroke="#ffa000" stroke-width="1.61" stroke-opacity="0.95" />
<polyline points="715.4,198.1 750.5,183.7" fill="none" stroke="#ffa000" stroke-width="1.61" stroke-opacity="0.95" />
<polyline points="750.5,183.7 696.4,165.3" fill="none" stroke="#ffa000" stroke-width="1.61" stroke-opacity="0.95" />
<polyline points="696.4,165.3 661.2,178.3" fill="none" stroke="#ffa000" stroke-width="1.61" stroke-opacity="0.95" />
<polyline points="661.2,178.3 715.4,198.1" fill="none" stroke="#ffa000" stroke-width="1.61" stroke-opacity="0.95" />
<polyline points="711.9,230.8 715.4,198.1" fill="none" stroke="#ffa000" stroke-width="1.61" stroke-opacity="0.95" />
<polyline points="746.7,215.4 750.5,183.7" fill="none" stroke="#ffa000" stroke-width="1.61" stroke-opacity="0.95" />
<polyline points="693.5,195.7 696.4,165.3" fill="none" stroke="#ffa000" stroke-width="1.61" stroke-opacity="0.95" />
<polyline points="658.6,209.6 661.2,178.3" fill="none" stroke="#ffa000" stroke-width="1.61" stroke-opacity="0.95" />
<circle cx="711.9" cy="230.8" r="1.7" fill="#ff8c14" fill-opacity="0.95"/>
<circle cx="746.7" cy="215.4" r="1.6" fill="#ff8c14" fill-opacity="0.95"/>
<circle cx="693.5" cy="195.7" r="1.7" fill="#ff8c14" fill-opacity="0.95"/>
<circle cx="658.6" cy="209.6" r="1.1" fill="#ff8c14" fill-opacity="0.95"/>
<circle cx="715.4" cy="198.1" r="1.2" fill="#ff8c14" fill-opacity="0.95"/>
<circle cx="750.5" cy="183.7" r="1.0" fill="#ff8c14" fill-opacity="0.95"/>
<circle cx="696.4" cy="165.3" r="1.5" fill="#ff8c14" fill-opacity="0.95"/>
<circle cx="661.2" cy="178.3" r="1.2" fill="#ff8c14" fill-opacity="0.95"/>
<polygon points="706.6,228.7 758.9,205.9 767.1,140.1 713.8,159.8" fill="#ff9e50" fill-opacity="0.080" />
<polygon points="758.9,205.9 690.8,181.5 696.7,119.3 767.1,140.1" fill="#ff9e50" fill-opacity="0.080" />
<polygon points="713.8,159.8 767.1,140.1 696.7,119.3 643.4,136.7" fill="#ff9e50" fill-opacity="0.080" />
<polyline points="706.6,228.7 758.9,205.9" fill="none" stroke="#ffa000" stroke-width="1.03" stroke-opacity="0.80" />
<polyline points="758.9,205.9 690.8,181.5" fill="none" stroke="#ffa000" stroke-width="1.03" stroke-opacity="0.80" />
<polyline points="690.8,181.5 638.5,201.6" fill="none" stroke="#ffa000" stroke-width="1.03" stroke-opacity="0.80" />
<polyline points="638.5,201.6 706.6,228.7" fill="none" stroke="#ffa000" stroke-width="1.03" stroke-opacity="0.80" />
<polyline points="713.8,159.8 767.1,140.1" fill="none" stroke="#ffa000" stroke-width="1.03" stroke-opacity="0.80" />
<polyline points="767.1,140.1 696.7,119.3" fill="none" stroke="#ffa000" stroke-width="1.03" stroke-opacity="0.80" />
<polyline points="696.7,119.3 643.4,136.7" fill="none" stroke="#ffa000" stroke-width="1.03" stroke-opacity="0.80" />
<polyline points="643.4,136.7 713.8,159.8" fill="none" stroke="#ffa000" stroke-width="1.03" stroke-opacity="0.80" />
<polyline points="706.6,228.7 713.8,159.8" fill="none" stroke="#ffa000" stroke-width="1.03" stroke-opacity="0.80" />
<polyline points="758.9,205.9 767.1,140.1" fill="none" stroke="#ffa000" stroke-width="1.03" stroke-opacity="0.80" />
<polyline points="690.8,181.5 696.7,119.3" fill="none" stroke="#ffa000" stroke-width="1.03" stroke-opacity="0.80" />
<polyline points="638.5,201.6 643.4,136.7" fill="none" stroke="#ffa000" stroke-width="1.03" stroke-opacity="0.80" />
<circle cx="706.6" cy="228.7" r="1.1" fill="#ff8c14" fill-opacity="0.95"/>
<circle cx="758.9" cy="205.9" r="1.3" fill="#ff8c14" fill-opacity="0.95"/>
<circle cx="690.8" cy="181.5" r="1.6" fill="#ff8c14" fill-opacity="0.95"/>
<circle cx="638.5" cy="201.6" r="1.6" fill="#ff8c14" fill-opacity="0.95"/>
<circle cx="713.8" cy="159.8" r="1.2" fill="#ff8c14" fill-opacity="0.95"/>
<circle cx="767.1" cy="140.1" r="1.1" fill="#ff8c14" fill-opacity="0.95"/>
<circle cx="696.7" cy="119.3" r="1.6" fill="#ff8c14" fill-opacity="0.95"/>
<circle cx="643.4" cy="136.7" r="1.4" fill="#ff8c14" fill-opacity="0.95"/>
<polyline points="708.5,262.6 741.8,246.9" fill="none" stroke="#ffa520" stroke-width="1.72" stroke-opacity="0.95" />
<circle cx="708.5" cy="262.6" r="1.4" fill="#ff8a10" fill-opacity="1.00"/>
<circle cx="741.8" cy="246.9" r="1.4" fill="#ff8a10" fill-opacity="1.00"/>
<polyline points="709.5,253.4 742.9,237.9" fill="none" stroke="#ffa520" stroke-width="1.72" stroke-opacity="0.95" />
<circle cx="709.5" cy="253.4" r="1.4" fill="#ff8a10" fill-opacity="1.00"/>
<circle cx="742.9" cy="237.9" r="1.4" fill="#ff8a10" fill-opacity="1.00"/>
<polyline points="710.7,241.5 744.3,226.3" fill="none" stroke="#ffa520" stroke-width="1.72" stroke-opacity="0.95" />
<circle cx="710.7" cy="241.5" r="1.4" fill="#ff8a10" fill-opacity="1.00"/>
<circle cx="744.3" cy="226.3" r="1.4" fill="#ff8a10" fill-opacity="1.00"/>
<polyline points="713.0,220.0 746.8,205.4" fill="none" stroke="#ffa520" stroke-width="1.72" stroke-opacity="0.95" />
<circle cx="713.0" cy="220.0" r="1.4" fill="#ff8a10" fill-opacity="1.00"/>
<circle cx="746.8" cy="205.4" r="1.4" fill="#ff8a10" fill-opacity="1.00"/>
<polyline points="714.2,209.1 748.0,194.8" fill="none" stroke="#ffa520" stroke-width="1.72" stroke-opacity="0.95" />
<circle cx="714.2" cy="209.1" r="1.4" fill="#ff8a10" fill-opacity="1.00"/>
<circle cx="748.0" cy="194.8" r="1.4" fill="#ff8a10" fill-opacity="1.00"/>
<polyline points="710.6,270.2 715.0,229.4" fill="none" stroke="#ffa520" stroke-width="1.72" stroke-opacity="0.90" />
<polyline points="716.6,267.4 721.0,226.7" fill="none" stroke="#ffa520" stroke-width="1.72" stroke-opacity="0.90" />
<polyline points="722.4,264.6 727.0,224.1" fill="none" stroke="#ffa520" stroke-width="1.72" stroke-opacity="0.90" />
<polyline points="728.2,261.8 732.8,221.5" fill="none" stroke="#ffa520" stroke-width="1.72" stroke-opacity="0.90" />
<polyline points="733.9,259.1 738.6,219.0" fill="none" stroke="#ffa520" stroke-width="1.72" stroke-opacity="0.90" />
<polyline points="739.6,256.3 744.3,216.5" fill="none" stroke="#ffa520" stroke-width="1.72" stroke-opacity="0.90" />
<polyline points="707.5,220.6 758.7,198.7" fill="none" stroke="#ffa520" stroke-width="1.49" stroke-opacity="0.90" />
<circle cx="707.5" cy="220.6" r="1.4" fill="#ff8a10" fill-opacity="1.00"/>
<circle cx="758.7" cy="198.7" r="1.4" fill="#ff8a10" fill-opacity="1.00"/>
<polyline points="708.5,211.2 759.8,189.6" fill="none" stroke="#ffa520" stroke-width="1.49" stroke-opacity="0.90" />
<circle cx="708.5" cy="211.2" r="1.4" fill="#ff8a10" fill-opacity="1.00"/>
<circle cx="759.8" cy="189.6" r="1.4" fill="#ff8a10" fill-opacity="1.00"/>
<polyline points="709.5,201.6 760.9,180.5" fill="none" stroke="#ffa520" stroke-width="1.49" stroke-opacity="0.90" />
<circle cx="709.5" cy="201.6" r="1.4" fill="#ff8a10" fill-opacity="1.00"/>
<circle cx="760.9" cy="180.5" r="1.4" fill="#ff8a10" fill-opacity="1.00"/>
<polyline points="710.6,190.6 762.2,169.9" fill="none" stroke="#ffa520" stroke-width="1.49" stroke-opacity="0.90" />
<circle cx="710.6" cy="190.6" r="1.4" fill="#ff8a10" fill-opacity="1.00"/>
<circle cx="762.2" cy="169.9" r="1.4" fill="#ff8a10" fill-opacity="1.00"/>
<polyline points="711.8,179.5 763.6,159.3" fill="none" stroke="#ffa520" stroke-width="1.49" stroke-opacity="0.90" />
<circle cx="711.8" cy="179.5" r="1.4" fill="#ff8a10" fill-opacity="1.00"/>
<circle cx="763.6" cy="159.3" r="1.4" fill="#ff8a10" fill-opacity="1.00"/>
<polyline points="712.9,168.3 764.9,148.6" fill="none" stroke="#ffa520" stroke-width="1.49" stroke-opacity="0.90" />
<circle cx="712.9" cy="168.3" r="1.4" fill="#ff8a10" fill-opacity="1.00"/>
<circle cx="764.9" cy="148.6" r="1.4" fill="#ff8a10" fill-opacity="1.00"/>
<polyline points="709.8,227.3 717.0,158.6" fill="none" stroke="#ffa520" stroke-width="1.38" stroke-opacity="0.85" />
<circle cx="709.8" cy="227.3" r="1.4" fill="#ff8a10" fill-opacity="1.00"/>
<circle cx="717.0" cy="158.6" r="1.4" fill="#ff8a10" fill-opacity="1.00"/>
<polyline points="716.9,224.2 724.3,155.9" fill="none" stroke="#ffa520" stroke-width="1.38" stroke-opacity="0.85" />
<circle cx="716.9" cy="224.2" r="1.4" fill="#ff8a10" fill-opacity="1.00"/>
<circle cx="724.3" cy="155.9" r="1.4" fill="#ff8a10" fill-opacity="1.00"/>
<polyline points="724.0,221.1 731.5,153.3" fill="none" stroke="#ffa520" stroke-width="1.38" stroke-opacity="0.85" />
<circle cx="724.0" cy="221.1" r="1.4" fill="#ff8a10" fill-opacity="1.00"/>
<circle cx="731.5" cy="153.3" r="1.4" fill="#ff8a10" fill-opacity="1.00"/>
<polyline points="730.9,218.1 738.6,150.6" fill="none" stroke="#ffa520" stroke-width="1.38" stroke-opacity="0.85" />
<circle cx="730.9" cy="218.1" r="1.4" fill="#ff8a10" fill-opacity="1.00"/>
<circle cx="738.6" cy="150.6" r="1.4" fill="#ff8a10" fill-opacity="1.00"/>
<polyline points="737.8,215.1 745.6,148.1" fill="none" stroke="#ffa520" stroke-width="1.38" stroke-opacity="0.85" />
<circle cx="737.8" cy="215.1" r="1.4" fill="#ff8a10" fill-opacity="1.00"/>
<circle cx="745.6" cy="148.1" r="1.4" fill="#ff8a10" fill-opacity="1.00"/>
<polyline points="744.5,212.2 752.4,145.5" fill="none" stroke="#ffa520" stroke-width="1.38" stroke-opacity="0.85" />
<circle cx="744.5" cy="212.2" r="1.4" fill="#ff8a10" fill-opacity="1.00"/>
<circle cx="752.4" cy="145.5" r="1.4" fill="#ff8a10" fill-opacity="1.00"/>
<polyline points="751.2,209.2 759.2,143.0" fill="none" stroke="#ffa520" stroke-width="1.38" stroke-opacity="0.85" />
<circle cx="751.2" cy="209.2" r="1.4" fill="#ff8a10" fill-opacity="1.00"/>
<circle cx="759.2" cy="143.0" r="1.4" fill="#ff8a10" fill-opacity="1.00"/>
<polyline points="757.7,206.4 765.9,140.5" fill="none" stroke="#ffa520" stroke-width="1.38" stroke-opacity="0.85" />
<circle cx="757.7" cy="206.4" r="1.4" fill="#ff8a10" fill-opacity="1.00"/>
<circle cx="765.9" cy="140.5" r="1.4" fill="#ff8a10" fill-opacity="1.00"/>
<polygon points="722.0,186.2 720.4,189.2 723.6,189.2" fill="#fff" fill-opacity="0.85"/>
<polygon points="729.0,194.2 727.4,197.2 730.6,197.2" fill="#fff" fill-opacity="0.85"/>
<polygon points="736.0,201.2 734.4,204.2 737.6,204.2" fill="#fff" fill-opacity="0.85"/>
<polygon points="726.0,213.2 724.4,216.2 727.6,216.2" fill="#fff" fill-opacity="0.85"/>
<polygon points="733.0,222.2 731.4,225.2 734.6,225.2" fill="#fff" fill-opacity="0.85"/>
<polygon points="739.0,230.2 737.4,233.2 740.6,233.2" fill="#fff" fill-opacity="0.85"/>
<polygon points="724.0,238.2 722.4,241.2 725.6,241.2" fill="#fff" fill-opacity="0.85"/>
<circle cx="637.7" cy="232.1" r="1.2" fill="#ff8a10" fill-opacity="1.00"/>
<circle cx="641.7" cy="231.1" r="1.3" fill="#ff8a10" fill-opacity="1.00"/>
<circle cx="646.1" cy="229.9" r="1.8" fill="#ff8a10" fill-opacity="1.00"/>
<circle cx="648.3" cy="228.8" r="1.3" fill="#ff8a10" fill-opacity="1.00"/>
<circle cx="653.8" cy="226.4" r="1.5" fill="#ff8a10" fill-opacity="1.00"/>
<circle cx="657.0" cy="225.7" r="1.4" fill="#ff8a10" fill-opacity="1.00"/>
<circle cx="660.0" cy="223.3" r="1.4" fill="#ff8a10" fill-opacity="1.00"/>
<circle cx="663.7" cy="221.0" r="1.2" fill="#ff8a10" fill-opacity="1.00"/>
<circle cx="667.7" cy="219.8" r="1.4" fill="#ff8a10" fill-opacity="1.00"/>
<circle cx="672.6" cy="218.2" r="1.6" fill="#ff8a10" fill-opacity="1.00"/>
<circle cx="675.1" cy="216.7" r="1.2" fill="#ff8a10" fill-opacity="1.00"/>
<circle cx="679.0" cy="214.6" r="1.8" fill="#ff8a10" fill-opacity="1.00"/>
<circle cx="683.3" cy="213.4" r="1.6" fill="#ff8a10" fill-opacity="1.00"/>
<circle cx="687.7" cy="211.7" r="1.9" fill="#ff8a10" fill-opacity="1.00"/>
<circle cx="690.3" cy="211.0" r="1.9" fill="#ff8a10" fill-opacity="1.00"/>
<circle cx="693.8" cy="209.5" r="1.8" fill="#ff8a10" fill-opacity="1.00"/>
<circle cx="698.5" cy="207.7" r="1.9" fill="#ff8a10" fill-opacity="1.00"/>
<circle cx="701.5" cy="206.9" r="1.5" fill="#ff8a10" fill-opacity="1.00"/>
<circle cx="704.3" cy="204.2" r="1.3" fill="#ff8a10" fill-opacity="1.00"/>
<circle cx="707.3" cy="204.2" r="1.4" fill="#ff8a10" fill-opacity="1.00"/>
<circle cx="710.9" cy="201.4" r="1.9" fill="#ff8a10" fill-opacity="1.00"/>
<circle cx="715.8" cy="201.2" r="1.4" fill="#ff8a10" fill-opacity="1.00"/>
<circle cx="616.5" cy="214.9" r="1.6" fill="#ff8a10" fill-opacity="1.00"/>
<circle cx="621.9" cy="213.0" r="1.4" fill="#ff8a10" fill-opacity="1.00"/>
<circle cx="629.0" cy="211.9" r="1.6" fill="#ff8a10" fill-opacity="1.00"/>
<circle cx="633.0" cy="209.8" r="1.4" fill="#ff8a10" fill-opacity="1.00"/>
<circle cx="638.6" cy="205.8" r="1.5" fill="#ff8a10" fill-opacity="1.00"/>
<circle cx="644.2" cy="204.7" r="1.4" fill="#ff8a10" fill-opacity="1.00"/>
<circle cx="649.6" cy="201.6" r="1.4" fill="#ff8a10" fill-opacity="1.00"/>
<circle cx="654.0" cy="200.4" r="1.2" fill="#ff8a10" fill-opacity="1.00"/>
<circle cx="659.0" cy="198.2" r="1.4" fill="#ff8a10" fill-opacity="1.00"/>
<circle cx="665.3" cy="196.6" r="1.8" fill="#ff8a10" fill-opacity="1.00"/>
<circle cx="670.5" cy="195.0" r="1.9" fill="#ff8a10" fill-opacity="1.00"/>
<circle cx="675.0" cy="192.3" r="2.0" fill="#ff8a10" fill-opacity="1.00"/>
<circle cx="679.5" cy="191.1" r="1.7" fill="#ff8a10" fill-opacity="1.00"/>
<circle cx="684.3" cy="189.4" r="1.9" fill="#ff8a10" fill-opacity="1.00"/>
<circle cx="690.3" cy="187.3" r="1.8" fill="#ff8a10" fill-opacity="1.00"/>
<circle cx="694.2" cy="185.0" r="1.6" fill="#ff8a10" fill-opacity="1.00"/>
<polyline points="612.0,121.0 654.0,144.0" fill="none" stroke="#ffb860" stroke-width="3.91" stroke-opacity="0.45" />
<polyline points="610.5,122.0 652.5,145.0" fill="none" stroke="#ffa000" stroke-width="1.15" stroke-opacity="0.90" />
<polyline points="613.8,120.0 655.8,143.0" fill="none" stroke="#ffa000" stroke-width="1.15" stroke-opacity="0.90" />
<circle cx="612.0" cy="121.0" r="1.5" fill="#ff8a10" fill-opacity="1.00"/>
<circle cx="654.0" cy="144.0" r="1.5" fill="#ff8a10" fill-opacity="1.00"/>
<circle cx="633.0" cy="132.5" r="1.4" fill="#ff8a10" fill-opacity="1.00"/>
<polyline points="620.6,117.6 662.6,140.6" fill="none" stroke="#ffb860" stroke-width="3.91" stroke-opacity="0.45" />
<polyline points="619.1,118.6 661.1,141.6" fill="none" stroke="#ffa000" stroke-width="1.15" stroke-opacity="0.90" />
<polyline points="622.4,116.6 664.4,139.6" fill="none" stroke="#ffa000" stroke-width="1.15" stroke-opacity="0.90" />
<circle cx="620.6" cy="117.6" r="1.5" fill="#ff8a10" fill-opacity="1.00"/>
<circle cx="662.6" cy="140.6" r="1.5" fill="#ff8a10" fill-opacity="1.00"/>
<circle cx="641.6" cy="129.1" r="1.4" fill="#ff8a10" fill-opacity="1.00"/>
<polyline points="629.1,114.1 671.1,137.1" fill="none" stroke="#ffb860" stroke-width="3.91" stroke-opacity="0.45" />
<polyline points="627.6,115.1 669.6,138.1" fill="none" stroke="#ffa000" stroke-width="1.15" stroke-opacity="0.90" />
<polyline points="630.9,113.1 672.9,136.1" fill="none" stroke="#ffa000" stroke-width="1.15" stroke-opacity="0.90" />
<circle cx="629.1" cy="114.1" r="1.5" fill="#ff8a10" fill-opacity="1.00"/>
<circle cx="671.1" cy="137.1" r="1.5" fill="#ff8a10" fill-opacity="1.00"/>
<circle cx="650.1" cy="125.6" r="1.4" fill="#ff8a10" fill-opacity="1.00"/>
<polyline points="637.7,110.7 679.7,133.7" fill="none" stroke="#ffb860" stroke-width="3.91" stroke-opacity="0.45" />
<polyline points="636.2,111.7 678.2,134.7" fill="none" stroke="#ffa000" stroke-width="1.15" stroke-opacity="0.90" />
<polyline points="639.5,109.7 681.5,132.7" fill="none" stroke="#ffa000" stroke-width="1.15" stroke-opacity="0.90" />
<circle cx="637.7" cy="110.7" r="1.5" fill="#ff8a10" fill-opacity="1.00"/>
<circle cx="679.7" cy="133.7" r="1.5" fill="#ff8a10" fill-opacity="1.00"/>
<circle cx="658.7" cy="122.2" r="1.4" fill="#ff8a10" fill-opacity="1.00"/>
<polyline points="646.3,107.3 688.3,130.3" fill="none" stroke="#ffb860" stroke-width="3.91" stroke-opacity="0.45" />
<polyline points="644.8,108.3 686.8,131.3" fill="none" stroke="#ffa000" stroke-width="1.15" stroke-opacity="0.90" />
<polyline points="648.1,106.3 690.1,129.3" fill="none" stroke="#ffa000" stroke-width="1.15" stroke-opacity="0.90" />
<circle cx="646.3" cy="107.3" r="1.5" fill="#ff8a10" fill-opacity="1.00"/>
<circle cx="688.3" cy="130.3" r="1.5" fill="#ff8a10" fill-opacity="1.00"/>
<circle cx="667.3" cy="118.8" r="1.4" fill="#ff8a10" fill-opacity="1.00"/>
<polyline points="654.9,103.9 696.9,126.9" fill="none" stroke="#ffb860" stroke-width="3.91" stroke-opacity="0.45" />
<polyline points="653.4,104.9 695.4,127.9" fill="none" stroke="#ffa000" stroke-width="1.15" stroke-opacity="0.90" />
<polyline points="656.7,102.9 698.7,125.9" fill="none" stroke="#ffa000" stroke-width="1.15" stroke-opacity="0.90" />
<circle cx="654.9" cy="103.9" r="1.5" fill="#ff8a10" fill-opacity="1.00"/>
<circle cx="696.9" cy="126.9" r="1.5" fill="#ff8a10" fill-opacity="1.00"/>
<circle cx="675.9" cy="115.4" r="1.4" fill="#ff8a10" fill-opacity="1.00"/>
<polyline points="663.4,100.4 705.4,123.4" fill="none" stroke="#ffb860" stroke-width="3.91" stroke-opacity="0.45" />
<polyline points="661.9,101.4 703.9,124.4" fill="none" stroke="#ffa000" stroke-width="1.15" stroke-opacity="0.90" />
<polyline points="665.2,99.4 707.2,122.4" fill="none" stroke="#ffa000" stroke-width="1.15" stroke-opacity="0.90" />
<circle cx="663.4" cy="100.4" r="1.5" fill="#ff8a10" fill-opacity="1.00"/>
<circle cx="705.4" cy="123.4" r="1.5" fill="#ff8a10" fill-opacity="1.00"/>
<circle cx="684.4" cy="111.9" r="1.4" fill="#ff8a10" fill-opacity="1.00"/>
<polyline points="672.0,97.0 714.0,120.0" fill="none" stroke="#ffb860" stroke-width="3.91" stroke-opacity="0.45" />
<polyline points="670.5,98.0 712.5,121.0" fill="none" stroke="#ffa000" stroke-width="1.15" stroke-opacity="0.90" />
<polyline points="673.8,96.0 715.8,119.0" fill="none" stroke="#ffa000" stroke-width="1.15" stroke-opacity="0.90" />
<circle cx="672.0" cy="97.0" r="1.5" fill="#ff8a10" fill-opacity="1.00"/>
<circle cx="714.0" cy="120.0" r="1.5" fill="#ff8a10" fill-opacity="1.00"/>
<circle cx="693.0" cy="108.5" r="1.4" fill="#ff8a10" fill-opacity="1.00"/>
<polygon points="598.9,125.4 672.0,95.0 716.0,110.0 719.4,162.3" fill="#ffb860" fill-opacity="0.220" />
<polyline points="598.9,125.4 672.0,95.0 716.0,110.0 719.4,162.3" fill="none" stroke="#ffa000" stroke-width="1.15" stroke-opacity="1.00" />
<polyline points="621.0,107.0 700.0,135.0" fill="none" stroke="#ffa000" stroke-width="1.15" stroke-opacity="0.80" />
<polyline points="600.0,131.0 716.0,166.0" fill="none" stroke="#ffa000" stroke-width="1.15" stroke-opacity="0.80" />
<polygon points="599.6,127.0 688.0,156.0 688.0,164.0 653.5,153.4 644.2,165.0 634.2,158.8 599.1,135.0" fill="#ffc898" fill-opacity="0.350" />
<polygon points="628.0,159.6 634.0,161.5 632.5,192.0 626.5,190.4" fill="#ffd4b4" fill-opacity="0.450" />
<polygon points="652.0,158.8 668.0,163.0 668.0,180.0 652.0,176.0" fill="#ee8408" fill-opacity="0.550" />
<polyline points="652.8,159.0 652.8,176.2" fill="none" stroke="#ff9a00" stroke-width="1.15" stroke-opacity="1.00" />
<polyline points="655.1,159.6 655.1,176.8" fill="none" stroke="#ff9a00" stroke-width="1.15" stroke-opacity="1.00" />
<polyline points="657.4,160.2 657.4,177.4" fill="none" stroke="#ff9a00" stroke-width="1.15" stroke-opacity="1.00" />
<polyline points="659.7,160.8 659.7,178.0" fill="none" stroke="#ff9a00" stroke-width="1.15" stroke-opacity="1.00" />
<polyline points="662.0,161.4 662.0,178.6" fill="none" stroke="#ff9a00" stroke-width="1.15" stroke-opacity="1.00" />
<polyline points="664.3,162.0 664.3,179.2" fill="none" stroke="#ff9a00" stroke-width="1.15" stroke-opacity="1.00" />
<polyline points="666.6,162.6 666.6,179.8" fill="none" stroke="#ff9a00" stroke-width="1.15" stroke-opacity="1.00" />
<polyline points="665.8,162.0 665.8,178.5" fill="none" stroke="#fff" stroke-width="1.38" stroke-opacity="1.00" stroke-dasharray="1.2 1.2"/>
<circle cx="634.7" cy="194.2" r="2.0" fill="#ff8a10" fill-opacity="1.00"/>
<circle cx="637.0" cy="193.7" r="1.9" fill="#ff8a10" fill-opacity="1.00"/>
<circle cx="640.1" cy="191.4" r="1.3" fill="#ff8a10" fill-opacity="1.00"/>
<circle cx="641.8" cy="191.0" r="1.4" fill="#ff8a10" fill-opacity="1.00"/>
<circle cx="646.0" cy="190.7" r="1.9" fill="#ff8a10" fill-opacity="1.00"/>
<circle cx="648.5" cy="190.3" r="1.7" fill="#ff8a10" fill-opacity="1.00"/>
<circle cx="650.1" cy="189.8" r="2.0" fill="#ff8a10" fill-opacity="1.00"/>
<circle cx="653.9" cy="188.5" r="1.9" fill="#ff8a10" fill-opacity="1.00"/>
<circle cx="655.9" cy="188.2" r="1.5" fill="#ff8a10" fill-opacity="1.00"/>
<circle cx="658.7" cy="186.4" r="2.0" fill="#ff8a10" fill-opacity="1.00"/>
<circle cx="661.8" cy="186.8" r="2.2" fill="#ff8a10" fill-opacity="1.00"/>
<circle cx="665.3" cy="185.2" r="1.7" fill="#ff8a10" fill-opacity="1.00"/>
<circle cx="668.5" cy="185.4" r="1.9" fill="#ff8a10" fill-opacity="1.00"/>
<circle cx="671.2" cy="183.0" r="1.4" fill="#ff8a10" fill-opacity="1.00"/>
<circle cx="673.3" cy="183.8" r="1.6" fill="#ff8a10" fill-opacity="1.00"/>
<circle cx="676.8" cy="181.4" r="1.4" fill="#ff8a10" fill-opacity="1.00"/>
<circle cx="679.0" cy="182.2" r="1.9" fill="#ff8a10" fill-opacity="1.00"/>
<circle cx="682.7" cy="180.6" r="1.8" fill="#ff8a10" fill-opacity="1.00"/>
<circle cx="685.1" cy="180.3" r="1.4" fill="#ff8a10" fill-opacity="1.00"/>
<circle cx="688.8" cy="178.9" r="2.2" fill="#ff8a10" fill-opacity="1.00"/>
<polyline points="716.0,112.0 717.0,138.6" fill="none" stroke="#ffa000" stroke-width="1.61" stroke-opacity="1.00" />
<polygon points="670.0,96.0 705.0,105.0 714.0,110.0 714.0,118.0 705.0,114.3 671.4,103.0" fill="#c8b4a8" fill-opacity="0.650" />
<polygon points="721.9,154.6 752.0,161.0 752.0,173.0 721.9,166.0" fill="#d0b8a8" fill-opacity="0.550" />
<polygon points="673.3,192.0 698.7,186.0 698.7,202.0 673.3,208.0" fill="#d8b8a0" fill-opacity="0.450" />
<polygon points="610.5,123.6 629.7,119.2 638.2,122.0 618.2,126.6" fill="#6a5c50" fill-opacity="0.850" />
<polygon points="631.3,129.7 643.6,125.4 649.8,127.4 637.4,132.0" fill="#7a6450" fill-opacity="0.700" />
<polyline points="598.9,125.4 719.4,162.3" fill="none" stroke="#fff0dc" stroke-width="1.61" stroke-opacity="1.00" stroke-dasharray="1.6 1.4"/>
<polyline points="719.4,162.3 704.8,296.5" fill="none" stroke="#fff6ec" stroke-width="1.61" stroke-opacity="1.00" />
<polyline points="598.9,125.4 599.6,136.0 631.3,157.5" fill="none" stroke="#ffe8d0" stroke-width="1.26" stroke-opacity="1.00" />
<polyline points="646.7,165.0 652.9,153.6 700.0,168.0" fill="none" stroke="#ffe8d0" stroke-width="1.15" stroke-opacity="0.80" />
<polyline points="673.0,98.0 690.0,103.0 690.0,117.0 673.0,112.0 673.0,98.0" fill="none" stroke="#ffa000" stroke-width="1.61" stroke-opacity="1.00" />
<polyline points="681.5,100.5 681.5,114.5" fill="none" stroke="#ffa000" stroke-width="1.15" stroke-opacity="1.00" />
<polyline points="673.0,105.0 690.0,110.0" fill="none" stroke="#ffa000" stroke-width="1.15" stroke-opacity="1.00" />
<polygon points="641.0,289.0 654.0,283.5 654.0,310.0 641.0,316.0" fill="#8c8884" fill-opacity="0.900" />
<polyline points="641.0,289.0 654.0,283.5 654.0,310.0 641.0,316.0 641.0,289.0" fill="none" stroke="#ffa000" stroke-width="1.49" stroke-opacity="1.00" />
<circle cx="647.0" cy="296.0" r="1.2" fill="#fff" fill-opacity="1.00"/>
<circle cx="693.0" cy="197.0" r="1.3" fill="#fff" fill-opacity="1.00"/>
<circle cx="735.0" cy="165.0" r="1.3" fill="#fff" fill-opacity="1.00"/>
<circle cx="728.0" cy="160.0" r="1.2" fill="#fff" fill-opacity="1.00"/>
<circle cx="657.0" cy="232.0" r="1.0" fill="#fff" fill-opacity="1.00"/>
<circle cx="629.0" cy="302.0" r="1.2" fill="#fff" fill-opacity="1.00"/>
<circle cx="672.2" cy="298.5" r="2.3" fill="#ff8c14" fill-opacity="1.00"/>
<circle cx="670.7" cy="182.1" r="1.4" fill="#ff8c14" fill-opacity="1.00"/>
<circle cx="750.0" cy="169.9" r="1.8" fill="#ff8c14" fill-opacity="1.00"/>
<circle cx="730.0" cy="232.8" r="2.2" fill="#ff8c14" fill-opacity="1.00"/>
<circle cx="711.3" cy="174.2" r="2.2" fill="#ff8c14" fill-opacity="1.00"/>
<circle cx="670.9" cy="189.1" r="1.4" fill="#ff8c14" fill-opacity="1.00"/>
<circle cx="653.9" cy="192.1" r="2.1" fill="#ff8c14" fill-opacity="1.00"/>
<circle cx="743.0" cy="186.6" r="1.6" fill="#ff8c14" fill-opacity="1.00"/>
<circle cx="693.1" cy="201.5" r="1.7" fill="#ff8c14" fill-opacity="1.00"/>
<circle cx="644.5" cy="322.9" r="1.5" fill="#ff8c14" fill-opacity="1.00"/>
<circle cx="641.4" cy="233.3" r="1.4" fill="#ff8c14" fill-opacity="1.00"/>
<circle cx="715.9" cy="220.6" r="2.0" fill="#ff8c14" fill-opacity="1.00"/>
<circle cx="701.9" cy="185.8" r="1.3" fill="#ff8c14" fill-opacity="1.00"/>
<circle cx="674.4" cy="197.9" r="1.5" fill="#ff8c14" fill-opacity="1.00"/>
<circle cx="640.5" cy="263.9" r="1.5" fill="#ff8c14" fill-opacity="1.00"/>
<circle cx="688.0" cy="208.7" r="1.4" fill="#ff8c14" fill-opacity="1.00"/>
<circle cx="624.7" cy="169.3" r="2.2" fill="#ff8c14" fill-opacity="1.00"/>
<circle cx="678.3" cy="171.8" r="2.2" fill="#ff8c14" fill-opacity="1.00"/>
<circle cx="621.2" cy="166.0" r="1.3" fill="#ff8c14" fill-opacity="1.00"/>
<circle cx="653.5" cy="144.6" r="1.5" fill="#ff8c14" fill-opacity="1.00"/>
<circle cx="640.2" cy="245.6" r="2.2" fill="#ff8c14" fill-opacity="1.00"/>
<circle cx="718.7" cy="212.5" r="1.7" fill="#ff8c14" fill-opacity="1.00"/>
<circle cx="682.7" cy="205.0" r="1.6" fill="#ff8c14" fill-opacity="1.00"/>
<circle cx="608.8" cy="184.0" r="2.3" fill="#ff8c14" fill-opacity="1.00"/>
<circle cx="633.4" cy="182.6" r="1.5" fill="#ff8c14" fill-opacity="1.00"/>
<circle cx="662.8" cy="219.5" r="2.2" fill="#ff8c14" fill-opacity="1.00"/>
<circle cx="602.4" cy="132.2" r="2.0" fill="#ff8c14" fill-opacity="1.00"/>
<circle cx="742.0" cy="225.3" r="1.8" fill="#ff8c14" fill-opacity="1.00"/>
<circle cx="638.6" cy="148.4" r="1.4" fill="#ff8c14" fill-opacity="1.00"/>
<circle cx="682.4" cy="269.4" r="2.2" fill="#ff8c14" fill-opacity="1.00"/>
<circle cx="714.2" cy="262.1" r="2.0" fill="#ff8c14" fill-opacity="1.00"/>
<circle cx="672.0" cy="241.8" r="1.2" fill="#ff8c14" fill-opacity="1.00"/>
<circle cx="723.9" cy="174.5" r="2.2" fill="#ff8c14" fill-opacity="1.00"/>
<circle cx="702.1" cy="189.5" r="1.3" fill="#ff8c14" fill-opacity="1.00"/>
<circle cx="639.1" cy="259.7" r="2.0" fill="#ff8c14" fill-opacity="1.00"/>
<circle cx="616.8" cy="140.3" r="1.8" fill="#ff8c14" fill-opacity="1.00"/>
<circle cx="692.0" cy="207.3" r="1.4" fill="#ff8c14" fill-opacity="1.00"/>
<circle cx="647.1" cy="222.7" r="2.3" fill="#ff8c14" fill-opacity="1.00"/>
<circle cx="674.9" cy="175.0" r="1.5" fill="#ff8c14" fill-opacity="1.00"/>
<circle cx="678.5" cy="267.8" r="1.7" fill="#ff8c14" fill-opacity="1.00"/>
<circle cx="640.0" cy="266.3" r="2.2" fill="#ff8c14" fill-opacity="1.00"/>
<circle cx="652.9" cy="214.2" r="2.0" fill="#ff8c14" fill-opacity="1.00"/>
<circle cx="630.6" cy="293.7" r="2.0" fill="#ff8c14" fill-opacity="1.00"/>
<circle cx="679.6" cy="168.7" r="2.3" fill="#ff8c14" fill-opacity="1.00"/>
<circle cx="648.7" cy="298.5" r="1.5" fill="#ff8c14" fill-opacity="1.00"/>
<circle cx="634.3" cy="285.9" r="1.5" fill="#ff8c14" fill-opacity="1.00"/>
<circle cx="628.8" cy="172.5" r="1.7" fill="#ff8c14" fill-opacity="1.00"/>
<circle cx="622.3" cy="208.5" r="1.4" fill="#ff8c14" fill-opacity="1.00"/>
<circle cx="607.2" cy="138.1" r="1.6" fill="#ff8c14" fill-opacity="1.00"/>
<circle cx="747.8" cy="194.9" r="1.4" fill="#ff8c14" fill-opacity="1.00"/>
<circle cx="659.4" cy="204.3" r="1.6" fill="#ff8c14" fill-opacity="1.00"/>
<circle cx="643.6" cy="199.6" r="2.3" fill="#ff8c14" fill-opacity="1.00"/>
<circle cx="632.0" cy="200.7" r="2.1" fill="#ff8c14" fill-opacity="1.00"/>
<circle cx="730.3" cy="216.7" r="1.3" fill="#ff8c14" fill-opacity="1.00"/>
<circle cx="674.6" cy="204.1" r="2.2" fill="#ff8c14" fill-opacity="1.00"/>
<circle cx="629.7" cy="202.3" r="2.2" fill="#ff8c14" fill-opacity="1.00"/>
<circle cx="605.4" cy="132.8" r="1.3" fill="#ff8c14" fill-opacity="1.00"/>
<circle cx="745.9" cy="179.7" r="2.0" fill="#ff8c14" fill-opacity="1.00"/>
<circle cx="742.5" cy="197.0" r="1.5" fill="#ff8c14" fill-opacity="1.00"/>
<circle cx="640.8" cy="276.7" r="1.5" fill="#ff8c14" fill-opacity="1.00"/>
<circle cx="602.8" cy="174.8" r="1.7" fill="#ff8c14" fill-opacity="1.00"/>
<circle cx="660.7" cy="178.4" r="1.7" fill="#ff8c14" fill-opacity="1.00"/>
<circle cx="628.1" cy="294.8" r="2.0" fill="#ff8c14" fill-opacity="1.00"/>
<circle cx="695.9" cy="194.6" r="1.6" fill="#ff8c14" fill-opacity="1.00"/>
<circle cx="656.7" cy="290.5" r="1.3" fill="#ff8c14" fill-opacity="1.00"/>
<circle cx="630.4" cy="284.3" r="1.5" fill="#ff8c14" fill-opacity="1.00"/>
<circle cx="609.2" cy="132.5" r="1.8" fill="#ff8c14" fill-opacity="1.00"/>
<circle cx="641.2" cy="143.1" r="1.3" fill="#ff8c14" fill-opacity="1.00"/>
<circle cx="678.6" cy="275.2" r="1.7" fill="#ff8c14" fill-opacity="1.00"/>
<circle cx="636.3" cy="213.4" r="1.9" fill="#ff8c14" fill-opacity="1.00"/>
<circle cx="645.8" cy="245.1" r="1.6" fill="#ff8c14" fill-opacity="1.00"/>
<circle cx="716.8" cy="167.4" r="1.5" fill="#ff8c14" fill-opacity="1.00"/>
<circle cx="638.1" cy="157.8" r="2.2" fill="#ff8c14" fill-opacity="1.00"/>
<circle cx="691.3" cy="194.3" r="1.6" fill="#ff8c14" fill-opacity="1.00"/>
<circle cx="635.9" cy="296.1" r="1.9" fill="#ff8c14" fill-opacity="1.00"/>
<circle cx="674.8" cy="298.3" r="2.1" fill="#ff8c14" fill-opacity="1.00"/>
<circle cx="645.8" cy="150.6" r="1.4" fill="#ff8c14" fill-opacity="1.00"/>
<circle cx="747.5" cy="204.0" r="2.2" fill="#ff8c14" fill-opacity="1.00"/>
<circle cx="670.7" cy="180.3" r="2.1" fill="#ff8c14" fill-opacity="1.00"/>
<circle cx="694.2" cy="256.3" r="1.4" fill="#ff8c14" fill-opacity="1.00"/>
<circle cx="657.8" cy="155.2" r="1.4" fill="#ff8c14" fill-opacity="1.00"/>
<circle cx="639.6" cy="251.9" r="1.9" fill="#ff8c14" fill-opacity="1.00"/>
<circle cx="651.2" cy="268.6" r="1.4" fill="#ff8c14" fill-opacity="1.00"/>
<circle cx="648.8" cy="168.3" r="2.1" fill="#ff8c14" fill-opacity="1.00"/>
<circle cx="615.1" cy="208.8" r="1.8" fill="#ff8c14" fill-opacity="1.00"/>
<circle cx="664.4" cy="185.2" r="1.5" fill="#ff8c14" fill-opacity="1.00"/>
<circle cx="751.2" cy="191.3" r="1.8" fill="#ff8c14" fill-opacity="1.00"/>
<circle cx="656.0" cy="213.3" r="2.2" fill="#ff8c14" fill-opacity="1.00"/>
<circle cx="630.4" cy="279.1" r="1.4" fill="#ff8c14" fill-opacity="1.00"/>
<circle cx="666.6" cy="298.6" r="1.6" fill="#ff8c14" fill-opacity="1.00"/>
<circle cx="740.0" cy="222.7" r="1.4" fill="#ff8c14" fill-opacity="1.00"/>
<circle cx="658.2" cy="231.9" r="1.4" fill="#ff8c14" fill-opacity="1.00"/>
<circle cx="644.2" cy="235.4" r="2.2" fill="#ff8c14" fill-opacity="1.00"/>
<circle cx="630.4" cy="152.1" r="2.2" fill="#ff8c14" fill-opacity="1.00"/>
<circle cx="660.9" cy="316.3" r="1.9" fill="#ff8c14" fill-opacity="1.00"/>
<circle cx="730.7" cy="159.2" r="2.1" fill="#ff8c14" fill-opacity="1.00"/>
<circle cx="634.4" cy="210.8" r="2.1" fill="#ff8c14" fill-opacity="1.00"/>
<circle cx="731.4" cy="164.0" r="1.4" fill="#ff8c14" fill-opacity="1.00"/>
<circle cx="662.8" cy="234.7" r="1.6" fill="#ff8c14" fill-opacity="1.00"/>
<circle cx="618.6" cy="177.6" r="2.0" fill="#ff8c14" fill-opacity="1.00"/>
<circle cx="688.8" cy="285.3" r="1.2" fill="#ff8c14" fill-opacity="1.00"/>
<circle cx="694.7" cy="241.5" r="1.9" fill="#ff8c14" fill-opacity="1.00"/>
<circle cx="647.8" cy="214.1" r="1.8" fill="#ff8c14" fill-opacity="1.00"/>
<circle cx="666.9" cy="264.5" r="1.7" fill="#ff8c14" fill-opacity="1.00"/>
<circle cx="697.8" cy="228.7" r="1.5" fill="#ff8c14" fill-opacity="1.00"/>
<circle cx="672.1" cy="163.3" r="1.7" fill="#ff8c14" fill-opacity="1.00"/>
<circle cx="616.0" cy="152.5" r="1.7" fill="#ff8c14" fill-opacity="1.00"/>
<circle cx="679.4" cy="205.2" r="2.2" fill="#ff8c14" fill-opacity="1.00"/>
<circle cx="729.1" cy="166.3" r="2.3" fill="#ff8c14" fill-opacity="1.00"/>
<circle cx="745.3" cy="160.3" r="2.1" fill="#ff8c14" fill-opacity="1.00"/>
<circle cx="655.0" cy="285.0" r="1.4" fill="#ff8c14" fill-opacity="1.00"/>
<circle cx="742.2" cy="183.5" r="2.1" fill="#ff8c14" fill-opacity="1.00"/>
<circle cx="745.9" cy="169.4" r="1.5" fill="#ff8c14" fill-opacity="1.00"/>
<circle cx="679.8" cy="192.8" r="1.2" fill="#ff8c14" fill-opacity="1.00"/>
<circle cx="628.0" cy="159.4" r="2.2" fill="#ff8c14" fill-opacity="1.00"/>
<circle cx="625.9" cy="291.1" r="1.3" fill="#ff8c14" fill-opacity="1.00"/>
<circle cx="683.7" cy="259.7" r="1.6" fill="#ff8c14" fill-opacity="1.00"/>
<circle cx="738.4" cy="242.6" r="1.8" fill="#ff8c14" fill-opacity="1.00"/>
<circle cx="661.9" cy="293.8" r="1.5" fill="#ff8c14" fill-opacity="1.00"/>
<circle cx="656.5" cy="286.8" r="1.7" fill="#ff8c14" fill-opacity="1.00"/>
<circle cx="627.1" cy="282.4" r="1.3" fill="#ff8c14" fill-opacity="1.00"/>
<circle cx="729.9" cy="178.9" r="1.9" fill="#ff8c14" fill-opacity="1.00"/>
<circle cx="705.0" cy="191.4" r="1.2" fill="#ff8c14" fill-opacity="1.00"/>
<circle cx="604.3" cy="156.9" r="1.9" fill="#ff8c14" fill-opacity="1.00"/>
<circle cx="668.0" cy="233.6" r="2.2" fill="#ff8c14" fill-opacity="1.00"/>
<circle cx="620.0" cy="173.4" r="1.9" fill="#ff8c14" fill-opacity="1.00"/>
<circle cx="655.6" cy="147.9" r="1.6" fill="#ff8c14" fill-opacity="1.00"/>
<circle cx="634.7" cy="248.6" r="1.8" fill="#ff8c14" fill-opacity="1.00"/>
<circle cx="631.5" cy="257.1" r="1.7" fill="#ff8c14" fill-opacity="1.00"/>
<circle cx="637.8" cy="156.9" r="1.3" fill="#ff8c14" fill-opacity="1.00"/>
<circle cx="723.9" cy="210.3" r="1.5" fill="#ff8c14" fill-opacity="1.00"/>
<circle cx="688.8" cy="199.4" r="1.9" fill="#ff8c14" fill-opacity="1.00"/>
<circle cx="716.1" cy="177.9" r="2.2" fill="#ff8c14" fill-opacity="1.00"/>
<circle cx="663.8" cy="175.6" r="1.3" fill="#ff8c14" fill-opacity="1.00"/>
<circle cx="621.6" cy="167.5" r="1.9" fill="#ff8c14" fill-opacity="1.00"/>
<circle cx="679.9" cy="260.8" r="2.1" fill="#ff8c14" fill-opacity="1.00"/>
<circle cx="626.8" cy="190.7" r="1.5" fill="#ff8c14" fill-opacity="1.00"/>
<circle cx="718.0" cy="223.6" r="2.0" fill="#ff8c14" fill-opacity="1.00"/>
<circle cx="671.2" cy="173.1" r="1.3" fill="#ff8c14" fill-opacity="1.00"/>
<circle cx="652.5" cy="283.7" r="2.0" fill="#ff8c14" fill-opacity="1.00"/>
<circle cx="641.4" cy="242.3" r="1.7" fill="#ff8c14" fill-opacity="1.00"/>
<circle cx="724.9" cy="235.9" r="1.5" fill="#ff8c14" fill-opacity="1.00"/>
<circle cx="633.6" cy="311.2" r="1.2" fill="#ff8c14" fill-opacity="1.00"/>
<circle cx="640.5" cy="175.2" r="2.0" fill="#ff8c14" fill-opacity="1.00"/>
<circle cx="651.1" cy="311.2" r="1.6" fill="#ff8c14" fill-opacity="1.00"/>
<circle cx="637.1" cy="317.0" r="1.9" fill="#ff8c14" fill-opacity="1.00"/>
<circle cx="709.6" cy="265.8" r="2.3" fill="#ff8c14" fill-opacity="1.00"/>
<circle cx="673.9" cy="302.7" r="2.0" fill="#ff8c14" fill-opacity="1.00"/>
<circle cx="735.9" cy="217.7" r="2.0" fill="#ff8c14" fill-opacity="1.00"/>
<circle cx="690.0" cy="190.4" r="1.4" fill="#ff8c14" fill-opacity="1.00"/>
<circle cx="603.2" cy="147.9" r="2.2" fill="#ff8c14" fill-opacity="1.00"/>
<circle cx="654.0" cy="155.3" r="1.2" fill="#ff8c14" fill-opacity="1.00"/>
<circle cx="700.2" cy="272.5" r="2.0" fill="#ff8c14" fill-opacity="1.00"/>
<circle cx="657.0" cy="298.0" r="2.1" fill="#ff8c14" fill-opacity="1.00"/>
<circle cx="631.8" cy="149.0" r="1.2" fill="#ff8c14" fill-opacity="1.00"/>
<circle cx="699.8" cy="186.1" r="1.3" fill="#ff8c14" fill-opacity="1.00"/>
<circle cx="631.7" cy="192.8" r="1.7" fill="#ff8c14" fill-opacity="1.00"/>
<circle cx="602.2" cy="179.6" r="1.5" fill="#ff8c14" fill-opacity="1.00"/>
<circle cx="713.3" cy="203.1" r="1.6" fill="#ff8c14" fill-opacity="1.00"/>
<circle cx="735.0" cy="255.9" r="1.2" fill="#ff8c14" fill-opacity="1.00"/>
<circle cx="664.9" cy="217.5" r="2.1" fill="#ff8c14" fill-opacity="1.00"/>
<circle cx="654.3" cy="274.2" r="1.8" fill="#ff8c14" fill-opacity="1.00"/>
<circle cx="633.5" cy="307.4" r="1.3" fill="#ff8c14" fill-opacity="1.00"/>
<circle cx="729.9" cy="161.4" r="1.2" fill="#ff8c14" fill-opacity="1.00"/>
<circle cx="631.2" cy="286.3" r="2.3" fill="#ff8c14" fill-opacity="1.00"/>
<circle cx="677.4" cy="293.6" r="1.4" fill="#ff8c14" fill-opacity="1.00"/>
<circle cx="677.9" cy="198.7" r="2.1" fill="#ff8c14" fill-opacity="1.00"/>
<circle cx="640.5" cy="324.7" r="1.5" fill="#ff8c14" fill-opacity="1.00"/>
<circle cx="633.2" cy="273.1" r="1.7" fill="#ff8c14" fill-opacity="1.00"/>
<circle cx="699.2" cy="200.5" r="1.6" fill="#ff8c14" fill-opacity="1.00"/>
<circle cx="662.0" cy="313.4" r="1.3" fill="#ff8c14" fill-opacity="1.00"/>
<circle cx="631.8" cy="181.0" r="2.2" fill="#ff8c14" fill-opacity="1.00"/>
<circle cx="679.0" cy="205.5" r="2.2" fill="#ff8c14" fill-opacity="1.00"/>
<circle cx="636.2" cy="222.7" r="1.8" fill="#ff8c14" fill-opacity="1.00"/>
<circle cx="702.2" cy="199.0" r="1.6" fill="#ff8c14" fill-opacity="1.00"/>
<circle cx="704.7" cy="282.0" r="1.4" fill="#ff8c14" fill-opacity="1.00"/>
<circle cx="669.0" cy="288.7" r="1.8" fill="#ff8c14" fill-opacity="1.00"/>
<circle cx="740.3" cy="175.6" r="1.4" fill="#ff8c14" fill-opacity="1.00"/>
<circle cx="647.1" cy="273.8" r="2.1" fill="#ff8c14" fill-opacity="1.00"/>
<circle cx="623.6" cy="158.3" r="1.5" fill="#ff8c14" fill-opacity="1.00"/>
<circle cx="651.1" cy="235.6" r="1.4" fill="#ff8c14" fill-opacity="1.00"/>
<circle cx="651.3" cy="165.4" r="2.3" fill="#ff8c14" fill-opacity="1.00"/>
<circle cx="668.4" cy="166.8" r="1.9" fill="#ff8c14" fill-opacity="1.00"/>
<circle cx="616.0" cy="169.0" r="1.6" fill="#ff8c14" fill-opacity="1.00"/>
<circle cx="678.9" cy="258.9" r="1.7" fill="#ff8c14" fill-opacity="1.00"/>
<circle cx="663.6" cy="281.8" r="2.2" fill="#ff8c14" fill-opacity="1.00"/>
<circle cx="667.6" cy="246.6" r="2.0" fill="#ff8c14" fill-opacity="1.00"/>
<circle cx="666.2" cy="173.6" r="2.0" fill="#ff8c14" fill-opacity="1.00"/>
<circle cx="707.5" cy="260.8" r="1.7" fill="#ff8c14" fill-opacity="1.00"/>
<circle cx="648.9" cy="258.0" r="1.3" fill="#ff8c14" fill-opacity="1.00"/>
<circle cx="665.9" cy="290.6" r="2.0" fill="#ff8c14" fill-opacity="1.00"/>
<circle cx="699.5" cy="178.2" r="1.7" fill="#ff8c14" fill-opacity="1.00"/>
<circle cx="671.6" cy="256.6" r="1.7" fill="#ff8c14" fill-opacity="1.00"/>
<circle cx="628.2" cy="263.6" r="2.1" fill="#ff8c14" fill-opacity="1.00"/>
<circle cx="661.0" cy="228.8" r="2.3" fill="#ff8c14" fill-opacity="1.00"/>
<circle cx="685.4" cy="276.8" r="1.8" fill="#ff8c14" fill-opacity="1.00"/>
<circle cx="682.3" cy="212.0" r="2.2" fill="#ff8c14" fill-opacity="1.00"/>
<circle cx="632.5" cy="269.9" r="1.6" fill="#ff8c14" fill-opacity="1.00"/>
<circle cx="756.2" cy="200.4" r="1.3" fill="#ff8c14" fill-opacity="1.00"/>
<circle cx="642.7" cy="209.8" r="1.2" fill="#ff8c14" fill-opacity="1.00"/>
<circle cx="665.8" cy="214.2" r="2.0" fill="#ff8c14" fill-opacity="1.00"/>
<circle cx="655.2" cy="181.4" r="1.4" fill="#ff8c14" fill-opacity="1.00"/>
<circle cx="683.1" cy="171.6" r="2.1" fill="#ff8c14" fill-opacity="1.00"/>
<circle cx="661.5" cy="170.2" r="1.3" fill="#ff8c14" fill-opacity="1.00"/>
<circle cx="700.3" cy="224.4" r="1.8" fill="#ff8c14" fill-opacity="1.00"/>
<circle cx="635.0" cy="328.9" r="1.6" fill="#ff8c14" fill-opacity="1.00"/>
<circle cx="701.0" cy="298.2" r="2.1" fill="#ff8c14" fill-opacity="1.00"/>
<circle cx="673.7" cy="187.5" r="1.8" fill="#ff8c14" fill-opacity="1.00"/>
<circle cx="655.6" cy="305.0" r="1.5" fill="#ff8c14" fill-opacity="1.00"/>
<circle cx="659.0" cy="178.9" r="1.7" fill="#ff8c14" fill-opacity="1.00"/>
<circle cx="714.2" cy="184.8" r="1.5" fill="#ff8c14" fill-opacity="1.00"/>
<circle cx="647.1" cy="226.6" r="1.7" fill="#ff8c14" fill-opacity="1.00"/>
<circle cx="700.7" cy="264.6" r="1.6" fill="#ff8c14" fill-opacity="1.00"/>
<circle cx="703.7" cy="178.2" r="1.3" fill="#ff8c14" fill-opacity="1.00"/>
<circle cx="621.7" cy="174.7" r="2.1" fill="#ff8c14" fill-opacity="1.00"/>
<circle cx="654.3" cy="157.6" r="2.2" fill="#ff8c14" fill-opacity="1.00"/>
<circle cx="725.4" cy="160.8" r="2.2" fill="#ff8c14" fill-opacity="1.00"/>
<circle cx="696.1" cy="290.3" r="1.9" fill="#ff8c14" fill-opacity="1.00"/>
<circle cx="732.9" cy="167.1" r="2.0" fill="#ff8c14" fill-opacity="1.00"/>
<circle cx="683.7" cy="282.0" r="1.7" fill="#ff8c14" fill-opacity="1.00"/>
<circle cx="740.0" cy="242.6" r="1.5" fill="#ff8c14" fill-opacity="1.00"/>
<circle cx="636.3" cy="154.8" r="1.7" fill="#ff8c14" fill-opacity="1.00"/>
<circle cx="678.5" cy="239.3" r="2.1" fill="#ff8c14" fill-opacity="1.00"/>
<circle cx="673.7" cy="244.2" r="1.9" fill="#ff8c14" fill-opacity="1.00"/>
<circle cx="733.2" cy="204.6" r="1.7" fill="#ff8c14" fill-opacity="1.00"/>
<circle cx="700.7" cy="259.7" r="1.2" fill="#ff8c14" fill-opacity="1.00"/>
<circle cx="696.3" cy="269.5" r="2.2" fill="#ff8c14" fill-opacity="1.00"/>
<circle cx="680.5" cy="227.7" r="2.2" fill="#ff8c14" fill-opacity="1.00"/>
<circle cx="698.8" cy="196.9" r="2.1" fill="#ff8c14" fill-opacity="1.00"/>
<circle cx="657.4" cy="225.6" r="1.8" fill="#ff8c14" fill-opacity="1.00"/>
<circle cx="722.0" cy="169.9" r="1.7" fill="#ff8c14" fill-opacity="1.00"/>
<circle cx="666.4" cy="242.4" r="2.1" fill="#ff8c14" fill-opacity="1.00"/>
<circle cx="645.7" cy="300.1" r="1.6" fill="#ff8c14" fill-opacity="1.00"/>
<circle cx="679.4" cy="182.8" r="1.8" fill="#ff8c14" fill-opacity="1.00"/>
<circle cx="725.5" cy="195.3" r="1.5" fill="#ff8c14" fill-opacity="1.00"/>
<circle cx="646.7" cy="249.2" r="1.9" fill="#ff8c14" fill-opacity="1.00"/>
<circle cx="629.3" cy="319.9" r="1.9" fill="#ff8c14" fill-opacity="1.00"/>
<circle cx="704.1" cy="292.0" r="2.2" fill="#ff8c14" fill-opacity="1.00"/>
<circle cx="696.7" cy="255.6" r="1.9" fill="#ff8c14" fill-opacity="1.00"/>
<circle cx="710.2" cy="251.3" r="1.9" fill="#ff8c14" fill-opacity="1.00"/>
<circle cx="632.9" cy="266.2" r="1.7" fill="#ff8c14" fill-opacity="1.00"/>
<circle cx="703.7" cy="203.3" r="2.1" fill="#ff8c14" fill-opacity="1.00"/>
<circle cx="724.6" cy="244.1" r="1.5" fill="#ff8c14" fill-opacity="1.00"/>
<circle cx="647.2" cy="214.4" r="1.6" fill="#ff8c14" fill-opacity="1.00"/>
<circle cx="667.7" cy="260.9" r="2.2" fill="#ff8c14" fill-opacity="1.00"/>
<circle cx="605.2" cy="150.5" r="2.1" fill="#ff8c14" fill-opacity="1.00"/>
<circle cx="660.8" cy="250.4" r="2.2" fill="#ff8c14" fill-opacity="1.00"/>
<circle cx="664.8" cy="146.9" r="1.9" fill="#ff8c14" fill-opacity="1.00"/>
<circle cx="632.8" cy="157.4" r="1.2" fill="#ff8c14" fill-opacity="1.00"/>
<circle cx="713.9" cy="176.5" r="2.0" fill="#ff8c14" fill-opacity="1.00"/>
<circle cx="628.8" cy="136.0" r="2.1" fill="#ff8c14" fill-opacity="1.00"/>
<circle cx="699.4" cy="275.1" r="1.7" fill="#ff8c14" fill-opacity="1.00"/>
<circle cx="747.9" cy="179.0" r="2.3" fill="#ff8c14" fill-opacity="1.00"/>
<circle cx="648.6" cy="279.4" r="1.4" fill="#ff8c14" fill-opacity="1.00"/>
<circle cx="736.5" cy="228.1" r="1.3" fill="#ff8c14" fill-opacity="1.00"/>
<circle cx="657.6" cy="246.8" r="1.7" fill="#ff8c14" fill-opacity="1.00"/>
<circle cx="726.3" cy="202.1" r="1.9" fill="#ff8c14" fill-opacity="1.00"/>
<circle cx="699.5" cy="213.6" r="1.6" fill="#ff8c14" fill-opacity="1.00"/>
<circle cx="724.3" cy="245.1" r="1.5" fill="#ff8c14" fill-opacity="1.00"/>
<circle cx="652.0" cy="253.3" r="2.3" fill="#ff8c14" fill-opacity="1.00"/>
<circle cx="731.7" cy="252.3" r="1.5" fill="#ff8c14" fill-opacity="1.00"/>
<circle cx="667.4" cy="312.9" r="1.6" fill="#ff8c14" fill-opacity="1.00"/>
<circle cx="708.3" cy="252.4" r="2.2" fill="#ff8c14" fill-opacity="1.00"/>
<circle cx="727.9" cy="185.2" r="1.2" fill="#ff8c14" fill-opacity="1.00"/>
<circle cx="640.9" cy="214.6" r="1.8" fill="#ff8c14" fill-opacity="1.00"/>
<circle cx="690.3" cy="183.2" r="2.1" fill="#ff8c14" fill-opacity="1.00"/>
<circle cx="744.9" cy="198.6" r="1.3" fill="#ff8c14" fill-opacity="1.00"/>
<circle cx="687.4" cy="293.7" r="1.4" fill="#ff8c14" fill-opacity="1.00"/>
<circle cx="636.3" cy="253.5" r="1.9" fill="#ff8c14" fill-opacity="1.00"/>
<circle cx="673.3" cy="169.0" r="1.5" fill="#ff8c14" fill-opacity="1.00"/>
<circle cx="636.1" cy="247.8" r="2.2" fill="#ff8c14" fill-opacity="1.00"/>
<circle cx="740.3" cy="235.6" r="1.7" fill="#ff8c14" fill-opacity="1.00"/>
<circle cx="693.1" cy="165.3" r="1.4" fill="#ff8c14" fill-opacity="1.00"/>
<circle cx="627.8" cy="273.4" r="1.6" fill="#ff8c14" fill-opacity="1.00"/>
<circle cx="689.1" cy="210.4" r="1.8" fill="#ff8c14" fill-opacity="1.00"/>
<circle cx="622.7" cy="134.8" r="2.3" fill="#ff8c14" fill-opacity="1.00"/>
<circle cx="658.7" cy="147.8" r="1.9" fill="#ff8c14" fill-opacity="1.00"/>
<circle cx="724.7" cy="158.4" r="1.9" fill="#ff8c14" fill-opacity="1.00"/>
<circle cx="654.0" cy="235.1" r="1.2" fill="#ff8c14" fill-opacity="1.00"/>
<circle cx="737.3" cy="228.1" r="1.8" fill="#ff8c14" fill-opacity="1.00"/>
<circle cx="640.7" cy="289.9" r="1.7" fill="#ff8c14" fill-opacity="1.00"/>
<circle cx="631.0" cy="163.6" r="1.3" fill="#ff8c14" fill-opacity="1.00"/>
<circle cx="738.0" cy="222.1" r="2.2" fill="#ff8c14" fill-opacity="1.00"/>
<circle cx="694.5" cy="209.3" r="1.3" fill="#ff8c14" fill-opacity="1.00"/>
<circle cx="752.2" cy="179.7" r="1.8" fill="#ff8c14" fill-opacity="1.00"/>
<circle cx="705.9" cy="208.4" r="1.7" fill="#ff8c14" fill-opacity="1.00"/>
<circle cx="624.4" cy="329.3" r="2.3" fill="#ff8c14" fill-opacity="1.00"/>
<circle cx="639.8" cy="199.7" r="2.2" fill="#ff8c14" fill-opacity="1.00"/>
<circle cx="712.3" cy="261.9" r="2.3" fill="#ff8c14" fill-opacity="1.00"/>
<circle cx="607.8" cy="156.0" r="2.0" fill="#ff8c14" fill-opacity="1.00"/>
<circle cx="646.6" cy="250.3" r="2.0" fill="#ff8c14" fill-opacity="1.00"/>
<circle cx="615.7" cy="193.8" r="1.5" fill="#ff8c14" fill-opacity="1.00"/>
<circle cx="625.8" cy="175.7" r="1.4" fill="#ff8c14" fill-opacity="1.00"/>
<circle cx="713.5" cy="166.6" r="1.2" fill="#ff8c14" fill-opacity="1.00"/>
<circle cx="747.1" cy="172.0" r="2.2" fill="#ff8c14" fill-opacity="1.00"/>
<circle cx="621.2" cy="219.8" r="1.3" fill="#ff8c14" fill-opacity="1.00"/>
<circle cx="699.3" cy="220.9" r="1.6" fill="#ff8c14" fill-opacity="1.00"/>
<circle cx="730.4" cy="226.2" r="1.9" fill="#ff8c14" fill-opacity="1.00"/>
<circle cx="621.7" cy="172.2" r="1.3" fill="#ff8c14" fill-opacity="1.00"/>
<circle cx="713.0" cy="242.2" r="1.4" fill="#ff8c14" fill-opacity="1.00"/>
<circle cx="738.0" cy="181.6" r="1.7" fill="#ff8c14" fill-opacity="1.00"/>
<circle cx="623.8" cy="182.6" r="2.1" fill="#ff8c14" fill-opacity="1.00"/>
<circle cx="652.4" cy="160.8" r="1.7" fill="#ff8c14" fill-opacity="1.00"/>
<circle cx="649.7" cy="316.1" r="1.3" fill="#ff8c14" fill-opacity="1.00"/>
<circle cx="632.6" cy="226.2" r="1.5" fill="#ff8c14" fill-opacity="1.00"/>
<circle cx="640.1" cy="168.0" r="1.6" fill="#ff8c14" fill-opacity="1.00"/>
<circle cx="645.2" cy="314.6" r="1.3" fill="#ff8c14" fill-opacity="1.00"/>
<circle cx="715.0" cy="187.4" r="2.3" fill="#ff8c14" fill-opacity="1.00"/>
<circle cx="653.4" cy="155.0" r="1.2" fill="#ff8c14" fill-opacity="1.00"/>
<circle cx="731.9" cy="236.6" r="1.4" fill="#ff8c14" fill-opacity="1.00"/>
<circle cx="633.8" cy="246.0" r="1.4" fill="#ff8c14" fill-opacity="1.00"/>
<circle cx="627.7" cy="288.0" r="2.0" fill="#ff8c14" fill-opacity="1.00"/>
<circle cx="630.3" cy="142.1" r="1.3" fill="#ff8c14" fill-opacity="1.00"/>
<circle cx="696.1" cy="230.0" r="1.5" fill="#ff8c14" fill-opacity="1.00"/>
<circle cx="631.8" cy="254.7" r="2.0" fill="#ff8c14" fill-opacity="1.00"/>
<circle cx="728.6" cy="248.5" r="1.4" fill="#ff8c14" fill-opacity="1.00"/>
<circle cx="664.1" cy="277.7" r="1.3" fill="#ff8c14" fill-opacity="1.00"/>
<circle cx="728.4" cy="196.2" r="2.1" fill="#ff8c14" fill-opacity="1.00"/>
<circle cx="737.0" cy="229.5" r="1.2" fill="#ff8c14" fill-opacity="1.00"/>
<circle cx="744.4" cy="226.0" r="2.2" fill="#ff8c14" fill-opacity="1.00"/>
<circle cx="641.4" cy="164.7" r="2.1" fill="#ff8c14" fill-opacity="1.00"/>
<circle cx="657.6" cy="159.9" r="1.6" fill="#ff8c14" fill-opacity="1.00"/>
<circle cx="682.0" cy="219.5" r="1.8" fill="#ff8c14" fill-opacity="1.00"/>
<circle cx="650.2" cy="275.5" r="1.6" fill="#ff8c14" fill-opacity="1.00"/>
<circle cx="678.0" cy="233.8" r="1.8" fill="#ff8c14" fill-opacity="1.00"/>
<circle cx="753.5" cy="172.6" r="1.4" fill="#ff8c14" fill-opacity="1.00"/>
<circle cx="615.3" cy="178.3" r="2.1" fill="#ff8c14" fill-opacity="1.00"/>
<circle cx="603.7" cy="145.8" r="2.0" fill="#ff8c14" fill-opacity="1.00"/>
<circle cx="694.7" cy="247.1" r="1.8" fill="#ff8c14" fill-opacity="1.00"/>
<circle cx="606.1" cy="151.4" r="1.7" fill="#ff8c14" fill-opacity="1.00"/>
<circle cx="659.1" cy="113.3" r="1.2" fill="#ff8c14" fill-opacity="1.00"/>
<circle cx="689.1" cy="105.3" r="1.8" fill="#ff8c14" fill-opacity="1.00"/>
<circle cx="712.4" cy="120.8" r="1.4" fill="#ff8c14" fill-opacity="1.00"/>
<circle cx="700.4" cy="130.3" r="1.4" fill="#ff8c14" fill-opacity="1.00"/>
<circle cx="712.8" cy="147.6" r="1.4" fill="#ff8c14" fill-opacity="1.00"/>
<circle cx="627.3" cy="117.1" r="1.4" fill="#ff8c14" fill-opacity="1.00"/>
<circle cx="717.7" cy="149.5" r="1.8" fill="#ff8c14" fill-opacity="1.00"/>
<circle cx="697.4" cy="152.5" r="1.1" fill="#ff8c14" fill-opacity="1.00"/>
<circle cx="712.0" cy="111.2" r="1.4" fill="#ff8c14" fill-opacity="1.00"/>
<circle cx="675.2" cy="119.1" r="1.5" fill="#ff8c14" fill-opacity="1.00"/>
<circle cx="606.5" cy="123.9" r="1.5" fill="#ff8c14" fill-opacity="1.00"/>
<circle cx="716.3" cy="147.6" r="1.8" fill="#ff8c14" fill-opacity="1.00"/>
<circle cx="705.9" cy="155.0" r="1.1" fill="#ff8c14" fill-opacity="1.00"/>
<circle cx="676.3" cy="112.3" r="1.6" fill="#ff8c14" fill-opacity="1.00"/>
<circle cx="631.4" cy="131.4" r="1.8" fill="#ff8c14" fill-opacity="1.00"/>
<circle cx="673.8" cy="111.3" r="1.5" fill="#ff8c14" fill-opacity="1.00"/>
<circle cx="633.1" cy="115.1" r="1.6" fill="#ff8c14" fill-opacity="1.00"/>
<circle cx="714.6" cy="129.5" r="1.3" fill="#ff8c14" fill-opacity="1.00"/>
<circle cx="654.9" cy="130.8" r="1.2" fill="#ff8c14" fill-opacity="1.00"/>
<circle cx="633.8" cy="122.1" r="1.3" fill="#ff8c14" fill-opacity="1.00"/>
<circle cx="672.4" cy="133.3" r="1.6" fill="#ff8c14" fill-opacity="1.00"/>
<circle cx="654.2" cy="131.8" r="1.6" fill="#ff8c14" fill-opacity="1.00"/>
<circle cx="655.2" cy="115.4" r="1.3" fill="#ff8c14" fill-opacity="1.00"/>
<circle cx="625.0" cy="129.4" r="1.4" fill="#ff8c14" fill-opacity="1.00"/>
<circle cx="669.5" cy="94.8" r="1.4" fill="#ff8c14" fill-opacity="1.00"/>
<circle cx="703.1" cy="110.5" r="1.5" fill="#ff8c14" fill-opacity="1.00"/>
<circle cx="658.0" cy="113.7" r="1.9" fill="#ff8c14" fill-opacity="1.00"/>
<circle cx="704.3" cy="124.4" r="1.1" fill="#ff8c14" fill-opacity="1.00"/>
<circle cx="645.3" cy="124.4" r="1.7" fill="#ff8c14" fill-opacity="1.00"/>
<circle cx="715.0" cy="145.0" r="1.2" fill="#ff8c14" fill-opacity="1.00"/>
<circle cx="639.1" cy="118.3" r="1.6" fill="#ff8c14" fill-opacity="1.00"/>
<circle cx="698.2" cy="129.7" r="1.7" fill="#ff8c14" fill-opacity="1.00"/>
<circle cx="688.7" cy="146.4" r="1.5" fill="#ff8c14" fill-opacity="1.00"/>
<circle cx="693.8" cy="142.9" r="1.8" fill="#ff8c14" fill-opacity="1.00"/>
<circle cx="669.5" cy="128.4" r="1.9" fill="#ff8c14" fill-opacity="1.00"/>
<circle cx="667.8" cy="122.8" r="1.7" fill="#ff8c14" fill-opacity="1.00"/>
<circle cx="704.5" cy="135.9" r="1.4" fill="#ff8c14" fill-opacity="1.00"/>
<circle cx="653.2" cy="125.6" r="1.7" fill="#ff8c14" fill-opacity="1.00"/>
<circle cx="633.7" cy="121.0" r="1.5" fill="#ff8c14" fill-opacity="1.00"/>
<circle cx="644.9" cy="116.2" r="1.7" fill="#ff8c14" fill-opacity="1.00"/>
<circle cx="150.1" cy="222.4" r="1.3" fill="#ff8c14" fill-opacity="1.00"/>
<circle cx="136.7" cy="173.6" r="1.6" fill="#ff8c14" fill-opacity="1.00"/>
<circle cx="142.9" cy="151.1" r="1.9" fill="#ff8c14" fill-opacity="1.00"/>
<circle cx="154.2" cy="220.7" r="1.5" fill="#ff8c14" fill-opacity="1.00"/>
<circle cx="147.9" cy="226.5" r="1.6" fill="#ff8c14" fill-opacity="1.00"/>
<circle cx="150.0" cy="192.2" r="1.6" fill="#ff8c14" fill-opacity="1.00"/>
<circle cx="152.4" cy="235.4" r="1.7" fill="#ff8c14" fill-opacity="1.00"/>
<circle cx="140.9" cy="181.7" r="1.4" fill="#ff8c14" fill-opacity="1.00"/>
<circle cx="152.5" cy="231.1" r="1.2" fill="#ff8c14" fill-opacity="1.00"/>
<circle cx="141.2" cy="180.2" r="1.6" fill="#ff8c14" fill-opacity="1.00"/>
<circle cx="154.1" cy="225.2" r="1.5" fill="#ff8c14" fill-opacity="1.00"/>
<circle cx="153.0" cy="202.4" r="1.6" fill="#ff8c14" fill-opacity="1.00"/>
<circle cx="146.2" cy="219.1" r="2.0" fill="#ff8c14" fill-opacity="1.00"/>
<circle cx="149.9" cy="219.4" r="1.9" fill="#ff8c14" fill-opacity="1.00"/>
<circle cx="152.5" cy="210.1" r="1.9" fill="#ff8c14" fill-opacity="1.00"/>
<circle cx="138.8" cy="183.7" r="1.6" fill="#ff8c14" fill-opacity="1.00"/>
<circle cx="140.6" cy="191.1" r="1.7" fill="#ff8c14" fill-opacity="1.00"/>
<circle cx="144.3" cy="202.4" r="1.7" fill="#ff8c14" fill-opacity="1.00"/>
<circle cx="135.3" cy="147.3" r="1.4" fill="#ff8c14" fill-opacity="1.00"/>
<circle cx="140.0" cy="208.1" r="1.9" fill="#ff8c14" fill-opacity="1.00"/>
<circle cx="148.1" cy="198.5" r="1.5" fill="#ff8c14" fill-opacity="1.00"/>
<circle cx="142.4" cy="196.9" r="1.6" fill="#ff8c14" fill-opacity="1.00"/>
<circle cx="152.6" cy="235.0" r="1.2" fill="#ff8c14" fill-opacity="1.00"/>
<circle cx="142.1" cy="157.7" r="1.2" fill="#ff8c14" fill-opacity="1.00"/>
<circle cx="139.2" cy="161.2" r="1.7" fill="#ff8c14" fill-opacity="1.00"/>
<circle cx="144.8" cy="217.4" r="1.8" fill="#ff8c14" fill-opacity="1.00"/>
<circle cx="144.4" cy="174.7" r="1.3" fill="#ff8c14" fill-opacity="1.00"/>
<circle cx="135.4" cy="171.0" r="1.6" fill="#ff8c14" fill-opacity="1.00"/>
<circle cx="141.4" cy="177.3" r="1.1" fill="#ff8c14" fill-opacity="1.00"/>
<circle cx="151.3" cy="227.5" r="1.5" fill="#ff8c14" fill-opacity="1.00"/>
<circle cx="143.2" cy="201.1" r="1.9" fill="#ff8c14" fill-opacity="1.00"/>
<circle cx="148.6" cy="224.2" r="1.8" fill="#ff8c14" fill-opacity="1.00"/>
<circle cx="142.6" cy="174.7" r="1.5" fill="#ff8c14" fill-opacity="1.00"/>
<circle cx="150.4" cy="230.9" r="1.7" fill="#ff8c14" fill-opacity="1.00"/>
<circle cx="137.4" cy="166.5" r="1.5" fill="#ff8c14" fill-opacity="1.00"/>
<circle cx="146.3" cy="216.7" r="1.4" fill="#ff8c14" fill-opacity="1.00"/>
<circle cx="145.4" cy="161.2" r="1.6" fill="#ff8c14" fill-opacity="1.00"/>
<circle cx="138.3" cy="154.1" r="1.5" fill="#ff8c14" fill-opacity="1.00"/>
<circle cx="132.1" cy="150.1" r="1.4" fill="#ff8c14" fill-opacity="1.00"/>
<circle cx="136.3" cy="167.0" r="1.3" fill="#ff8c14" fill-opacity="1.00"/>
<circle cx="138.5" cy="145.1" r="1.2" fill="#ff8c14" fill-opacity="1.00"/>
<circle cx="141.9" cy="209.4" r="1.9" fill="#ff8c14" fill-opacity="1.00"/>
<circle cx="137.4" cy="156.8" r="1.8" fill="#ff8c14" fill-opacity="1.00"/>
<circle cx="136.8" cy="159.7" r="1.4" fill="#ff8c14" fill-opacity="1.00"/>
<circle cx="150.4" cy="233.3" r="1.6" fill="#ff8c14" fill-opacity="1.00"/>
<circle cx="139.3" cy="164.8" r="1.7" fill="#ff8c14" fill-opacity="1.00"/>
<circle cx="145.7" cy="169.4" r="1.4" fill="#ff8c14" fill-opacity="1.00"/>
<circle cx="141.7" cy="166.9" r="1.9" fill="#ff8c14" fill-opacity="1.00"/>
<circle cx="138.2" cy="155.4" r="1.3" fill="#ff8c14" fill-opacity="1.00"/>
<circle cx="147.5" cy="216.3" r="1.6" fill="#ff8c14" fill-opacity="1.00"/>
<circle cx="140.0" cy="172.8" r="1.3" fill="#ff8c14" fill-opacity="1.00"/>
<circle cx="148.5" cy="223.2" r="1.2" fill="#ff8c14" fill-opacity="1.00"/>
<circle cx="143.8" cy="197.3" r="1.4" fill="#ff8c14" fill-opacity="1.00"/>
<circle cx="134.5" cy="148.4" r="1.2" fill="#ff8c14" fill-opacity="1.00"/>
<circle cx="144.9" cy="210.7" r="1.9" fill="#ff8c14" fill-opacity="1.00"/>
<circle cx="153.5" cy="217.2" r="1.2" fill="#ff8c14" fill-opacity="1.00"/>
<circle cx="134.7" cy="171.3" r="1.7" fill="#ff8c14" fill-opacity="1.00"/>
<circle cx="141.0" cy="178.3" r="1.7" fill="#ff8c14" fill-opacity="1.00"/>
<circle cx="144.8" cy="167.5" r="1.7" fill="#ff8c14" fill-opacity="1.00"/>
<circle cx="134.1" cy="162.6" r="1.8" fill="#ff8c14" fill-opacity="1.00"/>
<circle cx="141.3" cy="209.3" r="1.2" fill="#ff8c14" fill-opacity="1.00"/>
<circle cx="136.9" cy="162.7" r="1.1" fill="#ff8c14" fill-opacity="1.00"/>
<circle cx="143.2" cy="173.1" r="1.9" fill="#ff8c14" fill-opacity="1.00"/>
<circle cx="148.5" cy="197.3" r="1.5" fill="#ff8c14" fill-opacity="1.00"/>
<circle cx="145.2" cy="206.7" r="1.9" fill="#ff8c14" fill-opacity="1.00"/>
<circle cx="146.4" cy="214.9" r="1.9" fill="#ff8c14" fill-opacity="1.00"/>
<circle cx="140.4" cy="200.6" r="1.2" fill="#ff8c14" fill-opacity="1.00"/>
<circle cx="145.9" cy="218.8" r="1.8" fill="#ff8c14" fill-opacity="1.00"/>
<circle cx="139.9" cy="151.1" r="1.8" fill="#ff8c14" fill-opacity="1.00"/>
<circle cx="147.6" cy="219.6" r="2.0" fill="#ff8c14" fill-opacity="1.00"/>
<circle cx="148.9" cy="185.2" r="1.8" fill="#ff8c14" fill-opacity="1.00"/>
<circle cx="151.0" cy="220.8" r="1.1" fill="#ff8c14" fill-opacity="1.00"/>
<circle cx="146.7" cy="209.4" r="1.9" fill="#ff8c14" fill-opacity="1.00"/>
<circle cx="141.6" cy="154.5" r="1.7" fill="#ff8c14" fill-opacity="1.00"/>
<circle cx="146.9" cy="218.9" r="2.0" fill="#ff8c14" fill-opacity="1.00"/>
<circle cx="147.3" cy="203.3" r="1.2" fill="#ff8c14" fill-opacity="1.00"/>
<circle cx="141.1" cy="177.6" r="1.4" fill="#ff8c14" fill-opacity="1.00"/>
<circle cx="141.0" cy="157.3" r="1.3" fill="#ff8c14" fill-opacity="1.00"/>
<circle cx="140.4" cy="167.2" r="1.9" fill="#ff8c14" fill-opacity="1.00"/>
<circle cx="139.5" cy="179.0" r="1.2" fill="#ff8c14" fill-opacity="1.00"/>
<circle cx="143.4" cy="198.3" r="1.6" fill="#ff8c14" fill-opacity="1.00"/>
<circle cx="144.6" cy="215.4" r="1.6" fill="#ff8c14" fill-opacity="1.00"/>
<circle cx="147.4" cy="189.1" r="1.2" fill="#ff8c14" fill-opacity="1.00"/>
<circle cx="139.2" cy="171.1" r="1.2" fill="#ff8c14" fill-opacity="1.00"/>
<circle cx="137.0" cy="171.7" r="1.5" fill="#ff8c14" fill-opacity="1.00"/>
<circle cx="135.6" cy="154.2" r="1.4" fill="#ff8c14" fill-opacity="1.00"/>
<circle cx="133.3" cy="158.5" r="2.0" fill="#ff8c14" fill-opacity="1.00"/>
<circle cx="143.2" cy="214.6" r="2.0" fill="#ff8c14" fill-opacity="1.00"/>
<circle cx="140.5" cy="197.4" r="1.5" fill="#ff8c14" fill-opacity="1.00"/>
<circle cx="139.8" cy="160.7" r="1.9" fill="#ff8c14" fill-opacity="1.00"/>
<circle cx="148.5" cy="205.9" r="1.7" fill="#ff8c14" fill-opacity="1.00"/>
<circle cx="137.1" cy="167.2" r="1.1" fill="#ff8c14" fill-opacity="1.00"/>
<circle cx="153.0" cy="215.5" r="1.3" fill="#ff8c14" fill-opacity="1.00"/>
<circle cx="151.3" cy="205.4" r="1.3" fill="#ff8c14" fill-opacity="1.00"/>
<circle cx="152.9" cy="217.7" r="1.4" fill="#ff8c14" fill-opacity="1.00"/>
<circle cx="143.4" cy="161.1" r="1.4" fill="#ff8c14" fill-opacity="1.00"/>
<circle cx="143.7" cy="197.3" r="1.3" fill="#ff8c14" fill-opacity="1.00"/>
<circle cx="137.3" cy="146.7" r="1.8" fill="#ff8c14" fill-opacity="1.00"/>
<circle cx="153.8" cy="211.4" r="1.5" fill="#ff8c14" fill-opacity="1.00"/>
<circle cx="140.1" cy="191.0" r="1.6" fill="#ff8c14" fill-opacity="1.00"/>
<circle cx="139.7" cy="149.7" r="1.5" fill="#ff8c14" fill-opacity="1.00"/>
<circle cx="150.2" cy="231.5" r="1.5" fill="#ff8c14" fill-opacity="1.00"/>
<circle cx="142.2" cy="160.8" r="1.9" fill="#ff8c14" fill-opacity="1.00"/>
<circle cx="152.7" cy="222.9" r="1.4" fill="#ff8c14" fill-opacity="1.00"/>
<circle cx="147.3" cy="205.9" r="1.4" fill="#ff8c14" fill-opacity="1.00"/>
<circle cx="145.7" cy="187.0" r="1.9" fill="#ff8c14" fill-opacity="1.00"/>
<circle cx="136.2" cy="159.4" r="1.6" fill="#ff8c14" fill-opacity="1.00"/>
<circle cx="138.1" cy="176.3" r="1.4" fill="#ff8c14" fill-opacity="1.00"/>
<circle cx="150.0" cy="189.2" r="1.9" fill="#ff8c14" fill-opacity="1.00"/>
<circle cx="153.9" cy="233.7" r="1.8" fill="#ff8c14" fill-opacity="1.00"/>
<circle cx="139.1" cy="148.8" r="1.4" fill="#ff8c14" fill-opacity="1.00"/>
<circle cx="151.6" cy="198.0" r="1.7" fill="#ff8c14" fill-opacity="1.00"/>
<circle cx="139.2" cy="174.1" r="1.1" fill="#ff8c14" fill-opacity="1.00"/>
<circle cx="141.6" cy="161.9" r="1.2" fill="#ff8c14" fill-opacity="1.00"/>
<circle cx="145.5" cy="206.3" r="1.5" fill="#ff8c14" fill-opacity="1.00"/>
<circle cx="145.9" cy="194.1" r="1.2" fill="#ff8c14" fill-opacity="1.00"/>
<circle cx="144.2" cy="161.4" r="1.2" fill="#ff8c14" fill-opacity="1.00"/>
<circle cx="148.2" cy="222.5" r="1.6" fill="#ff8c14" fill-opacity="1.00"/>
<circle cx="140.2" cy="168.5" r="1.3" fill="#ff8c14" fill-opacity="1.00"/>
<circle cx="140.7" cy="198.3" r="1.6" fill="#ff8c14" fill-opacity="1.00"/>
<circle cx="136.0" cy="149.5" r="1.5" fill="#ff8c14" fill-opacity="1.00"/>
<circle cx="150.7" cy="224.4" r="1.8" fill="#ff8c14" fill-opacity="1.00"/>
<circle cx="144.3" cy="155.1" r="1.2" fill="#ff8c14" fill-opacity="1.00"/>
<circle cx="148.7" cy="219.9" r="2.0" fill="#ff8c14" fill-opacity="1.00"/>
<circle cx="149.2" cy="196.3" r="1.8" fill="#ff8c14" fill-opacity="1.00"/>
<circle cx="133.4" cy="147.9" r="1.1" fill="#ff8c14" fill-opacity="1.00"/>
<circle cx="142.4" cy="199.6" r="1.7" fill="#ff8c14" fill-opacity="1.00"/>
<circle cx="148.4" cy="185.2" r="1.9" fill="#ff8c14" fill-opacity="1.00"/>
<circle cx="151.0" cy="198.5" r="1.3" fill="#ff8c14" fill-opacity="1.00"/>
<circle cx="146.4" cy="214.3" r="1.7" fill="#ff8c14" fill-opacity="1.00"/>
<circle cx="146.0" cy="220.2" r="1.8" fill="#ff8c14" fill-opacity="1.00"/>
<circle cx="152.7" cy="229.7" r="1.6" fill="#ff8c14" fill-opacity="1.00"/>
<circle cx="138.3" cy="153.8" r="1.2" fill="#ff8c14" fill-opacity="1.00"/>
<circle cx="152.3" cy="228.4" r="1.3" fill="#ff8c14" fill-opacity="1.00"/>
<circle cx="148.1" cy="187.0" r="1.2" fill="#ff8c14" fill-opacity="1.00"/>
<circle cx="131.0" cy="144.8" r="1.3" fill="#ff8c14" fill-opacity="1.00"/>
<circle cx="142.7" cy="197.1" r="1.4" fill="#ff8c14" fill-opacity="1.00"/>
<circle cx="143.3" cy="157.7" r="1.7" fill="#ff8c14" fill-opacity="1.00"/>
<circle cx="154.2" cy="217.6" r="1.4" fill="#ff8c14" fill-opacity="1.00"/>
<circle cx="138.6" cy="159.4" r="1.8" fill="#ff8c14" fill-opacity="1.00"/>
<circle cx="132.2" cy="146.6" r="1.7" fill="#ff8c14" fill-opacity="1.00"/>
<circle cx="142.5" cy="180.7" r="1.9" fill="#ff8c14" fill-opacity="1.00"/>
<circle cx="147.6" cy="182.1" r="1.2" fill="#ff8c14" fill-opacity="1.00"/>
<circle cx="138.0" cy="177.0" r="1.6" fill="#ff8c14" fill-opacity="1.00"/>
<circle cx="132.2" cy="146.2" r="1.5" fill="#ff8c14" fill-opacity="1.00"/>
<circle cx="144.3" cy="198.2" r="1.1" fill="#ff8c14" fill-opacity="1.00"/>
<circle cx="143.7" cy="197.4" r="1.5" fill="#ff8c14" fill-opacity="1.00"/>
<circle cx="150.6" cy="233.3" r="1.7" fill="#ff8c14" fill-opacity="1.00"/>
<circle cx="137.8" cy="170.3" r="1.3" fill="#ff8c14" fill-opacity="1.00"/>
<circle cx="146.0" cy="199.3" r="2.0" fill="#ff8c14" fill-opacity="1.00"/>
<circle cx="137.1" cy="146.3" r="1.9" fill="#ff8c14" fill-opacity="1.00"/>
<circle cx="150.5" cy="216.5" r="1.4" fill="#ff8c14" fill-opacity="1.00"/>
<circle cx="144.7" cy="172.3" r="1.9" fill="#ff8c14" fill-opacity="1.00"/>
<circle cx="144.4" cy="208.7" r="1.8" fill="#ff8c14" fill-opacity="1.00"/>
<circle cx="146.5" cy="192.0" r="1.6" fill="#ff8c14" fill-opacity="1.00"/>
<circle cx="137.3" cy="182.5" r="1.4" fill="#ff8c14" fill-opacity="1.00"/>
<circle cx="152.2" cy="234.1" r="1.3" fill="#ff8c14" fill-opacity="1.00"/>
<circle cx="138.1" cy="165.6" r="1.1" fill="#ff8c14" fill-opacity="1.00"/>
<circle cx="150.0" cy="224.3" r="1.6" fill="#ff8c14" fill-opacity="1.00"/>
<circle cx="137.0" cy="171.9" r="1.4" fill="#ff8c14" fill-opacity="1.00"/>
<circle cx="144.3" cy="173.9" r="1.9" fill="#ff8c14" fill-opacity="1.00"/>
<circle cx="147.4" cy="177.1" r="1.2" fill="#ff8c14" fill-opacity="1.00"/>
<circle cx="140.1" cy="162.5" r="1.4" fill="#ff8c14" fill-opacity="1.00"/>
<circle cx="148.1" cy="217.2" r="1.2" fill="#ff8c14" fill-opacity="1.00"/>
<circle cx="149.5" cy="189.6" r="1.3" fill="#ff8c14" fill-opacity="1.00"/>
<circle cx="131.7" cy="143.5" r="1.7" fill="#ff8c14" fill-opacity="1.00"/>
<circle cx="138.5" cy="164.1" r="1.6" fill="#ff8c14" fill-opacity="1.00"/>
<circle cx="151.6" cy="222.9" r="1.8" fill="#ff8c14" fill-opacity="1.00"/>
<circle cx="152.3" cy="231.1" r="1.8" fill="#ff8c14" fill-opacity="1.00"/>
<circle cx="149.2" cy="223.8" r="1.3" fill="#ff8c14" fill-opacity="1.00"/>
<circle cx="150.0" cy="195.4" r="1.9" fill="#ff8c14" fill-opacity="1.00"/>
<circle cx="137.4" cy="165.2" r="1.7" fill="#ff8c14" fill-opacity="1.00"/>
<circle cx="145.3" cy="182.4" r="1.2" fill="#ff8c14" fill-opacity="1.00"/>
<circle cx="137.2" cy="184.1" r="1.4" fill="#ff8c14" fill-opacity="1.00"/>
<circle cx="145.7" cy="190.4" r="1.5" fill="#ff8c14" fill-opacity="1.00"/>
<circle cx="141.4" cy="143.2" r="2.0" fill="#ff8c14" fill-opacity="1.00"/>
<circle cx="138.2" cy="148.7" r="1.4" fill="#ff8c14" fill-opacity="1.00"/>
<circle cx="133.0" cy="151.1" r="1.8" fill="#ff8c14" fill-opacity="1.00"/>
<circle cx="141.5" cy="151.6" r="1.6" fill="#ff8c14" fill-opacity="1.00"/>
<circle cx="146.7" cy="200.1" r="1.6" fill="#ff8c14" fill-opacity="1.00"/>
<circle cx="144.9" cy="175.2" r="1.7" fill="#ff8c14" fill-opacity="1.00"/>
<circle cx="152.2" cy="214.5" r="1.8" fill="#ff8c14" fill-opacity="1.00"/>
<circle cx="151.9" cy="232.9" r="1.6" fill="#ff8c14" fill-opacity="1.00"/>
<circle cx="149.5" cy="229.0" r="1.5" fill="#ff8c14" fill-opacity="1.00"/>
<circle cx="150.6" cy="205.2" r="2.0" fill="#ff8c14" fill-opacity="1.00"/>
<circle cx="143.3" cy="164.8" r="1.1" fill="#ff8c14" fill-opacity="1.00"/>
<circle cx="132.6" cy="156.5" r="1.6" fill="#ff8c14" fill-opacity="1.00"/>
<circle cx="144.9" cy="161.0" r="1.2" fill="#ff8c14" fill-opacity="1.00"/>
<circle cx="142.2" cy="162.2" r="1.2" fill="#ff8c14" fill-opacity="1.00"/>
<circle cx="139.8" cy="144.1" r="2.0" fill="#ff8c14" fill-opacity="1.00"/>
<circle cx="146.3" cy="191.1" r="1.8" fill="#ff8c14" fill-opacity="1.00"/>
<circle cx="141.6" cy="189.2" r="1.2" fill="#ff8c14" fill-opacity="1.00"/>
<circle cx="142.4" cy="212.9" r="1.5" fill="#ff8c14" fill-opacity="1.00"/>
<circle cx="146.6" cy="224.0" r="1.5" fill="#ff8c14" fill-opacity="1.00"/>
<circle cx="153.9" cy="229.0" r="1.3" fill="#ff8c14" fill-opacity="1.00"/>
<circle cx="137.3" cy="168.1" r="1.3" fill="#ff8c14" fill-opacity="1.00"/>
<circle cx="142.9" cy="163.9" r="1.4" fill="#ff8c14" fill-opacity="1.00"/>
<circle cx="151.4" cy="235.2" r="1.2" fill="#ff8c14" fill-opacity="1.00"/>
<circle cx="153.4" cy="223.1" r="1.8" fill="#ff8c14" fill-opacity="1.00"/>
<circle cx="147.5" cy="219.8" r="1.5" fill="#ff8c14" fill-opacity="1.00"/>
<circle cx="148.3" cy="226.7" r="1.6" fill="#ff8c14" fill-opacity="1.00"/>
<circle cx="144.8" cy="188.5" r="1.3" fill="#ff8c14" fill-opacity="1.00"/>
<circle cx="149.6" cy="226.4" r="1.9" fill="#ff8c14" fill-opacity="1.00"/>
<circle cx="143.9" cy="162.9" r="1.4" fill="#ff8c14" fill-opacity="1.00"/>
<circle cx="131.0" cy="145.8" r="1.1" fill="#ff8c14" fill-opacity="1.00"/>
<circle cx="148.8" cy="228.7" r="1.2" fill="#ff8c14" fill-opacity="1.00"/>
<circle cx="141.3" cy="158.8" r="1.4" fill="#ff8c14" fill-opacity="1.00"/>
<circle cx="152.5" cy="229.7" r="2.0" fill="#ff8c14" fill-opacity="1.00"/>
<circle cx="132.8" cy="146.3" r="1.7" fill="#ff8c14" fill-opacity="1.00"/>
<circle cx="136.5" cy="145.2" r="1.5" fill="#ff8c14" fill-opacity="1.00"/>
<circle cx="131.5" cy="154.9" r="1.4" fill="#ff8c14" fill-opacity="1.00"/>
<circle cx="147.6" cy="225.1" r="1.2" fill="#ff8c14" fill-opacity="1.00"/>
<circle cx="139.2" cy="185.6" r="1.2" fill="#ff8c14" fill-opacity="1.00"/>
<circle cx="148.4" cy="211.7" r="1.4" fill="#ff8c14" fill-opacity="1.00"/>
<circle cx="149.9" cy="190.8" r="1.3" fill="#ff8c14" fill-opacity="1.00"/>
<circle cx="153.5" cy="233.4" r="1.3" fill="#ff8c14" fill-opacity="1.00"/>
<circle cx="136.0" cy="159.6" r="1.1" fill="#ff8c14" fill-opacity="1.00"/>
<circle cx="143.5" cy="192.6" r="1.4" fill="#ff8c14" fill-opacity="1.00"/>
<circle cx="138.2" cy="143.0" r="1.6" fill="#ff8c14" fill-opacity="1.00"/>
<circle cx="147.8" cy="197.5" r="1.9" fill="#ff8c14" fill-opacity="1.00"/>
<circle cx="146.6" cy="210.6" r="1.5" fill="#ff8c14" fill-opacity="1.00"/>
<circle cx="151.5" cy="232.9" r="1.5" fill="#ff8c14" fill-opacity="1.00"/>
<circle cx="144.9" cy="155.9" r="1.6" fill="#ff8c14" fill-opacity="1.00"/>
<circle cx="149.8" cy="229.5" r="1.4" fill="#ff8c14" fill-opacity="1.00"/>
<circle cx="136.3" cy="166.1" r="1.9" fill="#ff8c14" fill-opacity="1.00"/>
<circle cx="153.8" cy="215.6" r="1.7" fill="#ff8c14" fill-opacity="1.00"/>
<circle cx="143.5" cy="175.5" r="1.4" fill="#ff8c14" fill-opacity="1.00"/>
<circle cx="149.9" cy="233.8" r="1.9" fill="#ff8c14" fill-opacity="1.00"/>
<circle cx="145.9" cy="194.0" r="1.3" fill="#ff8c14" fill-opacity="1.00"/>
<circle cx="149.8" cy="202.9" r="1.7" fill="#ff8c14" fill-opacity="1.00"/>
<circle cx="147.7" cy="217.7" r="0.9" fill="#fff" fill-opacity="1.00"/>
<circle cx="150.8" cy="226.2" r="0.9" fill="#fff" fill-opacity="1.00"/>
<circle cx="146.5" cy="213.0" r="0.9" fill="#fff" fill-opacity="1.00"/>
<circle cx="149.0" cy="221.0" r="0.9" fill="#fff" fill-opacity="1.00"/>
<circle cx="151.5" cy="230.0" r="0.9" fill="#fff" fill-opacity="1.00"/>
<circle cx="148.5" cy="209.0" r="0.9" fill="#fff" fill-opacity="1.00"/>
<circle cx="143.0" cy="170.0" r="0.9" fill="#fff" fill-opacity="1.00"/>
<circle cx="144.0" cy="178.0" r="0.9" fill="#fff" fill-opacity="1.00"/>
<polyline points="128.6,141.5 147.7,259.3" fill="none" stroke="#ffa000" stroke-width="1.15" stroke-opacity="0.90" />
<circle cx="303.9" cy="182.5" r="2.6" fill="#ff8a10" fill-opacity="1.00"/>
<circle cx="356.5" cy="295.5" r="2.6" fill="#ff8a10" fill-opacity="1.00"/>
<circle cx="318.0" cy="298.0" r="3.0" fill="#ff8a10" fill-opacity="1.00"/>
<circle cx="321.0" cy="300.0" r="2.5" fill="#ff8a10" fill-opacity="1.00"/>
<circle cx="444.0" cy="291.0" r="2.8" fill="#ff8a10" fill-opacity="1.00"/>
<circle cx="449.0" cy="289.0" r="2.5" fill="#ff8a10" fill-opacity="1.00"/>
<circle cx="515.0" cy="265.0" r="2.5" fill="#ff8a10" fill-opacity="1.00"/>
<circle cx="510.0" cy="268.0" r="2.0" fill="#ff8a10" fill-opacity="1.00"/>
<circle cx="449.5" cy="90.0" r="2.3" fill="#ff8a10" fill-opacity="1.00"/>
<circle cx="449.5" cy="94.0" r="2.0" fill="#ff8a10" fill-opacity="1.00"/>
<circle cx="449.0" cy="99.0" r="2.3" fill="#ff8a10" fill-opacity="1.00"/>
<circle cx="449.5" cy="104.0" r="2.0" fill="#ff8a10" fill-opacity="1.00"/>
<circle cx="498.0" cy="128.0" r="2.5" fill="#ff8a10" fill-opacity="1.00"/>
<circle cx="501.0" cy="130.0" r="2.0" fill="#ff8a10" fill-opacity="1.00"/>
<circle cx="679.0" cy="73.0" r="2.2" fill="#ff8a10" fill-opacity="1.00"/>
<circle cx="679.0" cy="78.0" r="2.0" fill="#ff8a10" fill-opacity="1.00"/>
<circle cx="366.0" cy="141.0" r="1.5" fill="#ff8a10" fill-opacity="1.00"/>
<circle cx="370.0" cy="148.0" r="1.5" fill="#ff8a10" fill-opacity="1.00"/>
<circle cx="373.0" cy="152.0" r="1.5" fill="#ff8a10" fill-opacity="1.00"/>
<circle cx="368.0" cy="154.0" r="1.3" fill="#ff8a10" fill-opacity="1.00"/>
<circle cx="395.0" cy="153.0" r="1.2" fill="#ff8a10" fill-opacity="1.00"/>
<circle cx="410.0" cy="150.0" r="1.2" fill="#ff8a10" fill-opacity="1.00"/>
<circle cx="459.0" cy="135.0" r="1.3" fill="#ff8a10" fill-opacity="1.00"/>
<circle cx="471.0" cy="131.0" r="1.3" fill="#ff8a10" fill-opacity="1.00"/>
<circle cx="215.0" cy="283.0" r="1.3" fill="#ff8a10" fill-opacity="1.00"/>
<circle cx="221.0" cy="296.0" r="1.3" fill="#ff8a10" fill-opacity="1.00"/>
<circle cx="163.0" cy="293.0" r="1.3" fill="#ff8a10" fill-opacity="1.00"/>
<circle cx="136.0" cy="294.0" r="1.3" fill="#ff8a10" fill-opacity="1.00"/>
<circle cx="143.0" cy="312.0" r="1.2" fill="#ff8a10" fill-opacity="1.00"/>
<circle cx="108.0" cy="312.0" r="1.3" fill="#ff8a10" fill-opacity="1.00"/>
<circle cx="113.0" cy="346.0" r="1.3" fill="#ff8a10" fill-opacity="1.00"/>
<circle cx="190.0" cy="338.0" r="1.2" fill="#ff8a10" fill-opacity="1.00"/>
<circle cx="196.0" cy="327.0" r="1.2" fill="#ff8a10" fill-opacity="1.00"/>
<circle cx="229.0" cy="281.0" r="1.3" fill="#ff8a10" fill-opacity="1.00"/>
<circle cx="280.0" cy="300.0" r="1.3" fill="#ff8a10" fill-opacity="1.00"/>
<circle cx="256.0" cy="315.0" r="1.3" fill="#ff8a10" fill-opacity="1.00"/>
<circle cx="585.0" cy="169.0" r="1.3" fill="#ff8a10" fill-opacity="1.00"/>
<circle cx="591.0" cy="175.0" r="1.3" fill="#ff8a10" fill-opacity="1.00"/>
<circle cx="302.0" cy="163.0" r="1.2" fill="#ff8a10" fill-opacity="1.00"/>
<circle cx="346.0" cy="143.0" r="1.2" fill="#ff8a10" fill-opacity="1.00"/>
<circle cx="281.0" cy="191.0" r="1.2" fill="#ff8a10" fill-opacity="1.00"/>
<circle cx="303.0" cy="195.0" r="1.2" fill="#ff8a10" fill-opacity="1.00"/>
<circle cx="645.0" cy="100.0" r="1.4" fill="#ff8a10" fill-opacity="1.00"/>
<circle cx="612.0" cy="96.0" r="1.4" fill="#ff8a10" fill-opacity="1.00"/>
<circle cx="608.0" cy="90.0" r="1.4" fill="#ff8a10" fill-opacity="1.00"/>
<circle cx="840.0" cy="167.0" r="1.2" fill="#ff8a10" fill-opacity="1.00"/>
<circle cx="820.0" cy="174.0" r="1.2" fill="#ff8a10" fill-opacity="1.00"/>
<circle cx="655.0" cy="84.0" r="1.4" fill="#ff8a10" fill-opacity="1.00"/>
<circle cx="660.0" cy="92.0" r="1.4" fill="#ff8a10" fill-opacity="1.00"/>
<circle cx="650.0" cy="95.0" r="1.4" fill="#ff8a10" fill-opacity="1.00"/>
<circle cx="134.9" cy="227.0" r="2.6" fill="#1a1a1a" fill-opacity="1.00"/>
<circle cx="134.9" cy="227.0" r="1.9" fill="#f06000" fill-opacity="1.00"/>
<g transform="translate(362.5,468.3)"><circle r="9.5" fill="none" stroke="#fff" stroke-width="1.6"/><circle r="9.5" fill="none" stroke="#e03020" stroke-width="1.6" stroke-dasharray="3.73 3.73"/><g stroke="#e06010" stroke-width="1.3"><line x1="-22" y1="0" x2="-5" y2="0" transform="rotate(-26)"/><line x1="5" y1="0" x2="22" y2="0" transform="rotate(-26)"/><line x1="0" y1="5" x2="0" y2="22"/><line x1="5" y1="0" x2="16" y2="0" transform="rotate(43)"/></g></g>
</svg></body></html>
